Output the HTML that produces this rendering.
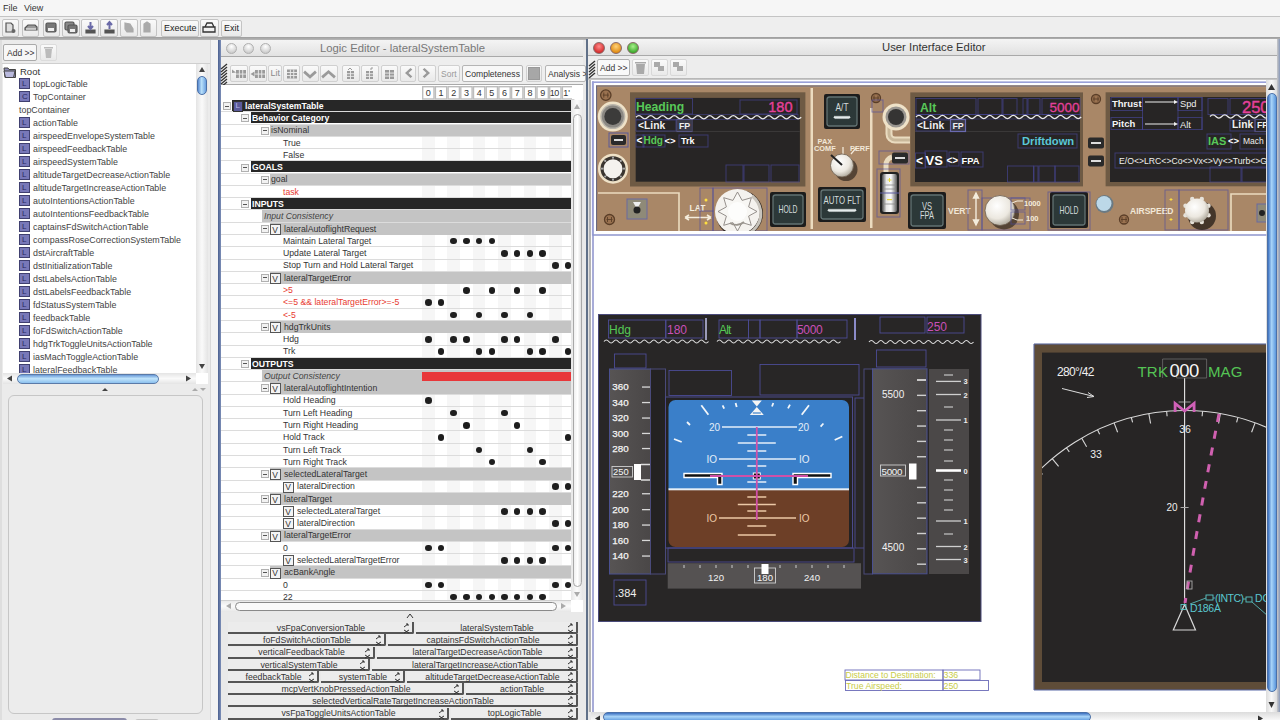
<!DOCTYPE html>
<html><head><meta charset="utf-8">
<style>
*{margin:0;padding:0;box-sizing:border-box}
html,body{width:1280px;height:720px;overflow:hidden;background:#e8e8e8;font-family:"Liberation Sans",sans-serif;position:relative}
.a{position:absolute}
.t{position:absolute;white-space:nowrap;line-height:1}
.btn{position:absolute;background:linear-gradient(#fafafa,#e9e9e9);border:1px solid #c4c4c4;border-radius:2px}
svg{position:absolute;overflow:visible}
</style></head><body>

<div class="a" style="left:0px;top:0px;width:1280px;height:16px;background:#f6f6f6"></div>
<div class="t" style="left:3px;top:4px;font-size:9px;color:#333;">File</div>
<div class="t" style="left:24px;top:4px;font-size:9px;color:#333;">View</div>
<div class="a" style="left:0px;top:16px;width:1280px;height:1px;background:#c4c4c4"></div>
<div class="a" style="left:0px;top:17px;width:1280px;height:21px;background:#eeeeee"></div>
<div class="a" style="left:0px;top:37px;width:1280px;height:3px;background:linear-gradient(#9c9c9c,#b8b8b8)"></div>
<div class="btn" style="left:1.5px;top:19px;width:17.5px;height:18px"></div>
<div class="btn" style="left:21.5px;top:19px;width:17.5px;height:18px"></div>
<div class="btn" style="left:42.5px;top:19px;width:17.5px;height:18px"></div>
<div class="btn" style="left:62px;top:19px;width:18px;height:18px"></div>
<div class="btn" style="left:81px;top:19px;width:18px;height:18px"></div>
<div class="btn" style="left:100px;top:19px;width:18px;height:18px"></div>
<div class="btn" style="left:120px;top:19px;width:18px;height:18px"></div>
<div class="btn" style="left:140px;top:19px;width:17px;height:18px"></div>
<div class="btn" style="left:161px;top:20px;width:38px;height:17px"></div>
<div class="t" style="left:164px;top:24px;font-size:9px;color:#222;">Execute</div>
<div class="btn" style="left:200px;top:19px;width:19px;height:18px"></div>
<div class="btn" style="left:221px;top:20px;width:21px;height:17px"></div>
<div class="t" style="left:224px;top:24px;font-size:9px;color:#222;">Exit</div>
<svg style="left:0;top:0" width="260" height="40">
<g fill="none" stroke="#555" stroke-width="1.2">
<path d="M6 23h5l2 2v7H6z" fill="#ddd"/><circle cx="13.5" cy="31" r="2" fill="#666" stroke="none"/>
<path d="M25 28l3-3h7l2 2v3h-12z" fill="#999"/><path d="M26 29h10" stroke="#eee"/>
<rect x="46" y="23" width="10" height="9" rx="1.5" fill="#777"/><rect x="48" y="28" width="6" height="3" fill="#eee" stroke="none"/>
<rect x="65" y="22" width="9" height="8" rx="1.5" fill="#888"/><rect x="68" y="25" width="9" height="8" rx="1.5" fill="#777"/><rect x="70" y="29" width="5" height="3" fill="#eee" stroke="none"/>
<path d="M86 30h9v3h-9z" fill="#555"/><path d="M90.5 22v7M88 26l2.5 3 2.5-3" stroke="#6a6aa8" stroke-width="2"/>
<path d="M105 30h9v3h-9z" fill="#555"/><path d="M109.5 29v-7M107 25l2.5-3 2.5 3" stroke="#6a6aa8" stroke-width="2"/>
<path d="M125 23l5 1 3 5v3h-6l-2-3z" fill="#aaa" stroke="#aaa"/>
<path d="M147 22l3 2v8h-6v-8z" fill="#aaa" stroke="#aaa"/>
<path d="M203 27h12v5h-12z M205 27l2-4h5l2 4" stroke="#333" stroke-width="1.3"/>
</g></svg>
<div class="a" style="left:0px;top:40px;width:219px;height:680px;background:#ebebeb"></div>
<div class="a" style="left:0px;top:40px;width:2px;height:680px;background:#dedede"></div>
<div class="a" style="left:210px;top:40px;width:1px;height:680px;background:#d9d9d9"></div>
<div class="a" style="left:211px;top:40px;width:7px;height:680px;background:#f3f3f3"></div>
<div class="btn" style="left:3px;top:44px;width:34px;height:17px;background:#f7f7f7;border-color:#aaa"></div>
<div class="t" style="left:7px;top:49px;font-size:8.5px;color:#333;">Add &gt;&gt;</div>
<div class="btn" style="left:40px;top:44px;width:17px;height:17px;border-color:#dcdcdc"></div>
<svg style="left:0;top:0" width="60" height="64"><path d="M45 49h7l-1 9h-5z" fill="#bbb"/><rect x="44" y="47" width="9" height="1.5" fill="#bbb"/></svg>
<div class="a" style="left:2px;top:63px;width:208px;height:1px;background:#cfcfcf"></div>
<div class="a" style="left:3px;top:64px;width:193px;height:309px;background:#fff"></div>
<div class="a" style="left:3px;top:64px;width:193px;height:309px;overflow:hidden">
<svg style="left:0;top:2.0999999999999943px" width="14" height="12"><path d="M1 2h4l1 1.5h6.5v8H2z" fill="#8f8fb8" stroke="#444" stroke-width="1"/><path d="M1 5h11l-1.5 6.5H2.5z" fill="#b9b9dd" stroke="#444" stroke-width="1"/></svg>
<div class="t" style="left:17px;top:3.0999999999999943px;font-size:9.5px;color:#333;">Root</div>
<div class="a" style="left:16px;top:14.299999999999994px;width:10.5px;height:10.5px;background:#7878b8;border:1px solid #404070"><div class="t" style="left:2px;top:1px;font-size:8px;color:#2a2a60">L</div></div>
<div class="t" style="left:30px;top:16.099999999999994px;font-size:8.9px;color:#444;">topLogicTable</div>
<div class="a" style="left:16px;top:27.299999999999994px;width:10.5px;height:10.5px;background:#7878b8;border:1px solid #404070"><div class="t" style="left:2px;top:1px;font-size:8px;color:#2a2a60">C</div></div>
<div class="t" style="left:30px;top:29.099999999999994px;font-size:8.9px;color:#444;">TopContainer</div>
<div class="t" style="left:16px;top:42.099999999999994px;font-size:8.9px;color:#444;">topContainer</div>
<div class="a" style="left:16px;top:53.3px;width:10.5px;height:10.5px;background:#7878b8;border:1px solid #404070"><div class="t" style="left:2px;top:1px;font-size:8px;color:#2a2a60">L</div></div>
<div class="t" style="left:30px;top:55.099999999999994px;font-size:8.9px;color:#444;">actionTable</div>
<div class="a" style="left:16px;top:66.3px;width:10.5px;height:10.5px;background:#7878b8;border:1px solid #404070"><div class="t" style="left:2px;top:1px;font-size:8px;color:#2a2a60">L</div></div>
<div class="t" style="left:30px;top:68.1px;font-size:8.9px;color:#444;">airspeedEnvelopeSystemTable</div>
<div class="a" style="left:16px;top:79.3px;width:10.5px;height:10.5px;background:#7878b8;border:1px solid #404070"><div class="t" style="left:2px;top:1px;font-size:8px;color:#2a2a60">L</div></div>
<div class="t" style="left:30px;top:81.1px;font-size:8.9px;color:#444;">airspeedFeedbackTable</div>
<div class="a" style="left:16px;top:92.3px;width:10.5px;height:10.5px;background:#7878b8;border:1px solid #404070"><div class="t" style="left:2px;top:1px;font-size:8px;color:#2a2a60">L</div></div>
<div class="t" style="left:30px;top:94.1px;font-size:8.9px;color:#444;">airspeedSystemTable</div>
<div class="a" style="left:16px;top:105.3px;width:10.5px;height:10.5px;background:#7878b8;border:1px solid #404070"><div class="t" style="left:2px;top:1px;font-size:8px;color:#2a2a60">L</div></div>
<div class="t" style="left:30px;top:107.1px;font-size:8.9px;color:#444;">altitudeTargetDecreaseActionTable</div>
<div class="a" style="left:16px;top:118.3px;width:10.5px;height:10.5px;background:#7878b8;border:1px solid #404070"><div class="t" style="left:2px;top:1px;font-size:8px;color:#2a2a60">L</div></div>
<div class="t" style="left:30px;top:120.1px;font-size:8.9px;color:#444;">altitudeTargetIncreaseActionTable</div>
<div class="a" style="left:16px;top:131.29999999999998px;width:10.5px;height:10.5px;background:#7878b8;border:1px solid #404070"><div class="t" style="left:2px;top:1px;font-size:8px;color:#2a2a60">L</div></div>
<div class="t" style="left:30px;top:133.1px;font-size:8.9px;color:#444;">autoIntentionsActionTable</div>
<div class="a" style="left:16px;top:144.29999999999998px;width:10.5px;height:10.5px;background:#7878b8;border:1px solid #404070"><div class="t" style="left:2px;top:1px;font-size:8px;color:#2a2a60">L</div></div>
<div class="t" style="left:30px;top:146.1px;font-size:8.9px;color:#444;">autoIntentionsFeedbackTable</div>
<div class="a" style="left:16px;top:157.29999999999998px;width:10.5px;height:10.5px;background:#7878b8;border:1px solid #404070"><div class="t" style="left:2px;top:1px;font-size:8px;color:#2a2a60">L</div></div>
<div class="t" style="left:30px;top:159.1px;font-size:8.9px;color:#444;">captainsFdSwitchActionTable</div>
<div class="a" style="left:16px;top:170.29999999999998px;width:10.5px;height:10.5px;background:#7878b8;border:1px solid #404070"><div class="t" style="left:2px;top:1px;font-size:8px;color:#2a2a60">L</div></div>
<div class="t" style="left:30px;top:172.1px;font-size:8.9px;color:#444;">compassRoseCorrectionSystemTable</div>
<div class="a" style="left:16px;top:183.29999999999998px;width:10.5px;height:10.5px;background:#7878b8;border:1px solid #404070"><div class="t" style="left:2px;top:1px;font-size:8px;color:#2a2a60">L</div></div>
<div class="t" style="left:30px;top:185.1px;font-size:8.9px;color:#444;">dstAircraftTable</div>
<div class="a" style="left:16px;top:196.3px;width:10.5px;height:10.5px;background:#7878b8;border:1px solid #404070"><div class="t" style="left:2px;top:1px;font-size:8px;color:#2a2a60">L</div></div>
<div class="t" style="left:30px;top:198.10000000000002px;font-size:8.9px;color:#444;">dstInitializationTable</div>
<div class="a" style="left:16px;top:209.3px;width:10.5px;height:10.5px;background:#7878b8;border:1px solid #404070"><div class="t" style="left:2px;top:1px;font-size:8px;color:#2a2a60">L</div></div>
<div class="t" style="left:30px;top:211.10000000000002px;font-size:8.9px;color:#444;">dstLabelsActionTable</div>
<div class="a" style="left:16px;top:222.3px;width:10.5px;height:10.5px;background:#7878b8;border:1px solid #404070"><div class="t" style="left:2px;top:1px;font-size:8px;color:#2a2a60">L</div></div>
<div class="t" style="left:30px;top:224.10000000000002px;font-size:8.9px;color:#444;">dstLabelsFeedbackTable</div>
<div class="a" style="left:16px;top:235.3px;width:10.5px;height:10.5px;background:#7878b8;border:1px solid #404070"><div class="t" style="left:2px;top:1px;font-size:8px;color:#2a2a60">L</div></div>
<div class="t" style="left:30px;top:237.10000000000002px;font-size:8.9px;color:#444;">fdStatusSystemTable</div>
<div class="a" style="left:16px;top:248.3px;width:10.5px;height:10.5px;background:#7878b8;border:1px solid #404070"><div class="t" style="left:2px;top:1px;font-size:8px;color:#2a2a60">L</div></div>
<div class="t" style="left:30px;top:250.10000000000002px;font-size:8.9px;color:#444;">feedbackTable</div>
<div class="a" style="left:16px;top:261.3px;width:10.5px;height:10.5px;background:#7878b8;border:1px solid #404070"><div class="t" style="left:2px;top:1px;font-size:8px;color:#2a2a60">L</div></div>
<div class="t" style="left:30px;top:263.1px;font-size:8.9px;color:#444;">foFdSwitchActionTable</div>
<div class="a" style="left:16px;top:274.3px;width:10.5px;height:10.5px;background:#7878b8;border:1px solid #404070"><div class="t" style="left:2px;top:1px;font-size:8px;color:#2a2a60">L</div></div>
<div class="t" style="left:30px;top:276.1px;font-size:8.9px;color:#444;">hdgTrkToggleUnitsActionTable</div>
<div class="a" style="left:16px;top:287.3px;width:10.5px;height:10.5px;background:#7878b8;border:1px solid #404070"><div class="t" style="left:2px;top:1px;font-size:8px;color:#2a2a60">L</div></div>
<div class="t" style="left:30px;top:289.1px;font-size:8.9px;color:#444;">iasMachToggleActionTable</div>
<div class="a" style="left:16px;top:300.3px;width:10.5px;height:10.5px;background:#7878b8;border:1px solid #404070"><div class="t" style="left:2px;top:1px;font-size:8px;color:#2a2a60">L</div></div>
<div class="t" style="left:30px;top:302.1px;font-size:8.9px;color:#444;">lateralFeedbackTable</div>
</div>
<div class="a" style="left:196px;top:64px;width:12px;height:309px;background:linear-gradient(90deg,#e4e4e4,#fafafa,#e4e4e4)"></div>
<svg style="left:196px;top:64px" width="12" height="309"><path d="M6 3l3 5H3z" fill="#444"/><path d="M3 300h6l-3 5z" fill="#444"/></svg>
<div class="a" style="left:197px;top:76px;width:10px;height:19px;background:linear-gradient(90deg,#5a8ad0,#b8e0fa 45%,#6aa0e0);border-radius:5px;border:1px solid #4a70a8"></div>
<div class="a" style="left:3px;top:373px;width:193px;height:11px;background:linear-gradient(#e4e4e4,#fafafa,#e4e4e4)"></div>
<svg style="left:3px;top:373px" width="193" height="11"><path d="M4 5.5l5-3v6z" fill="#444"/><path d="M183 2.5l5 3-5 3z" fill="#444"/></svg>
<div class="a" style="left:17px;top:373.5px;width:142px;height:10.5px;background:linear-gradient(#6a9ad8,#c0e4fb 45%,#8cc0ee);border-radius:5px;border:1px solid #5a7aa8"></div>
<div class="a" style="left:196px;top:373px;width:12px;height:11px;background:#fff"></div>
<svg style="left:0;top:384px" width="210" height="11"><path d="M102 7l3-3 3 3z" fill="#444"/><path d="M192 7l3-3 3 3z" fill="#aaa"/><path d="M200 4h6l-3 3z" fill="#aaa"/></svg>
<div class="a" style="left:8px;top:395px;width:195px;height:319px;background:#ececec;border:1px solid #c6c6c6;border-radius:6px"></div>
<div class="a" style="left:52px;top:718px;width:75px;height:4px;background:#8a8aa8;border-radius:3px 3px 0 0"></div>
<div class="a" style="left:135px;top:718.5px;width:24px;height:4px;background:#c4c4c4;border-radius:3px 3px 0 0"></div>
<div class="a" style="left:218px;top:40px;width:368px;height:680px;background:#e9e9e9"></div>
<div class="a" style="left:218px;top:40px;width:3px;height:680px;background:linear-gradient(90deg,#4a5f8f,#7d8fb8)"></div>
<div class="a" style="left:221px;top:40px;width:362px;height:16px;background:linear-gradient(#f4f4f4,#e2e2e2)"></div>
<div class="a" style="left:221px;top:56px;width:362px;height:1px;background:#a9a9a9"></div>
<div class="a" style="left:225.5px;top:43px;width:11px;height:11px;border-radius:50%;background:radial-gradient(circle at 50% 30%,#fff,#d8d8d8 60%,#bcbcbc);border:1px solid #b0b0b0"></div>
<div class="a" style="left:242.5px;top:43px;width:11px;height:11px;border-radius:50%;background:radial-gradient(circle at 50% 30%,#fff,#d8d8d8 60%,#bcbcbc);border:1px solid #b0b0b0"></div>
<div class="a" style="left:259.5px;top:43px;width:11px;height:11px;border-radius:50%;background:radial-gradient(circle at 50% 30%,#fff,#d8d8d8 60%,#bcbcbc);border:1px solid #b0b0b0"></div>
<div class="t" style="left:320px;top:43px;font-size:11.3px;color:#787878;">Logic Editor - lateralSystemTable</div>
<div class="a" style="left:221px;top:57px;width:362px;height:28px;background:#eeeeee"></div>
<div class="a" style="left:221px;top:84px;width:362px;height:1px;background:#a9a9a9"></div>
<svg style="left:221px;top:64px" width="7" height="20"><g stroke="#333" stroke-width="1.3"><path d="M0 5l6 -5"/><path d="M0 8l6 -5"/><path d="M0 11l6 -5"/><path d="M0 14l6 -5"/><path d="M0 17l6 -5"/><path d="M0 20l6 -5"/><path d="M0 23l6 -5"/></g></svg>
<div class="btn" style="left:230px;top:65px;width:18px;height:17px;border-color:#d0d0d0"></div>
<div class="btn" style="left:249px;top:65px;width:18px;height:17px;border-color:#d0d0d0"></div>
<div class="btn" style="left:268px;top:65px;width:14px;height:17px;border-color:#d0d0d0"></div>
<div class="btn" style="left:283px;top:65px;width:17px;height:17px;border-color:#d0d0d0"></div>
<div class="btn" style="left:302px;top:65px;width:17px;height:17px;border-color:#d0d0d0"></div>
<div class="btn" style="left:320px;top:65px;width:18px;height:17px;border-color:#d0d0d0"></div>
<div class="btn" style="left:342px;top:65px;width:18px;height:17px;border-color:#d0d0d0"></div>
<div class="btn" style="left:361px;top:65px;width:18px;height:17px;border-color:#d0d0d0"></div>
<div class="btn" style="left:381px;top:65px;width:17px;height:17px;border-color:#d0d0d0"></div>
<div class="btn" style="left:400px;top:65px;width:16px;height:17px;border-color:#d0d0d0"></div>
<div class="btn" style="left:418px;top:65px;width:18px;height:17px;border-color:#d0d0d0"></div>
<svg style="left:0;top:0" width="600" height="90"><rect x="236" y="70" width="10" height="8" fill="#9a9a9a"/><rect x="238.9" y="70" width="0.9" height="8" fill="#eee"/><rect x="242.3" y="70" width="0.9" height="8" fill="#eee"/><rect x="236" y="73.6" width="10" height="0.9" fill="#eee"/><path d="M232 69.5l4 3-4 0.5z" fill="#9a9a9a"/><rect x="255" y="70" width="10" height="8" fill="#9a9a9a"/><rect x="257.9" y="70" width="0.9" height="8" fill="#eee"/><rect x="261.3" y="70" width="0.9" height="8" fill="#eee"/><rect x="255" y="73.6" width="10" height="0.9" fill="#eee"/><path d="M250.5 74l4-2.5v5z" fill="#9a9a9a"/><rect x="287" y="69.5" width="10" height="9" fill="#9a9a9a"/><rect x="289.9" y="69.5" width="0.9" height="9" fill="#eee"/><rect x="293.3" y="69.5" width="0.9" height="9" fill="#eee"/><rect x="287" y="72.1" width="10" height="0.9" fill="#eee"/><rect x="287" y="75.1" width="10" height="0.9" fill="#eee"/><path d="M305 70.5l5 4.5 5-4.5 1.8 2.2-6.8 6-6.8-6z" fill="#9a9a9a"/><path d="M323 78.5l5.5-5 5.5 5 1.8-2.2-7.3-6.3-7.3 6.3z" fill="#9a9a9a"/><rect x="347" y="71" width="7" height="8" fill="#9a9a9a"/><rect x="350.1" y="71" width="0.9" height="8" fill="#eee"/><rect x="347" y="73.3" width="7" height="0.9" fill="#eee"/><rect x="347" y="75.9" width="7" height="0.9" fill="#eee"/><path d="M348 70l2-2 2 2" stroke="#9a9a9a" fill="none"/><rect x="366" y="71" width="7" height="8" fill="#9a9a9a"/><rect x="369.1" y="71" width="0.9" height="8" fill="#eee"/><rect x="366" y="73.3" width="7" height="0.9" fill="#eee"/><rect x="366" y="75.9" width="7" height="0.9" fill="#eee"/><path d="M371 70v-2h2" stroke="#9a9a9a" fill="none"/><rect x="385" y="70" width="9" height="9" fill="#9a9a9a"/><rect x="389.1" y="70" width="0.9" height="9" fill="#eee"/><rect x="385" y="72.6" width="9" height="0.9" fill="#eee"/><rect x="385" y="75.6" width="9" height="0.9" fill="#eee"/><path d="M410.5 68l-5.5 5 5.5 5 1.8-1.6-3.8-3.4 3.8-3.4z" fill="#9a9a9a"/><path d="M424.5 68l5.5 5-5.5 5-1.8-1.6 3.8-3.4-3.8-3.4z" fill="#9a9a9a"/></svg>
<div class="t" style="left:270.5px;top:69px;font-size:9px;color:#8a8a8a;">Lit</div>
<div class="btn" style="left:438px;top:65px;width:22px;height:17px;border-color:#d0d0d0"></div>
<div class="t" style="left:441px;top:69.5px;font-size:8.5px;color:#999;">Sort</div>
<div class="btn" style="left:462px;top:65px;width:61px;height:17px;border-color:#b5b5b5;background:#f8f8f8"></div>
<div class="t" style="left:465px;top:69.5px;font-size:8.6px;color:#333;">Completeness</div>
<div class="btn" style="left:526px;top:65px;width:16px;height:17px;border-color:#d0d0d0"></div>
<div class="a" style="left:528px;top:67px;width:12px;height:13px;background:#a7a7a7;border:1px solid #999"></div>
<div class="btn" style="left:545px;top:65px;width:41px;height:17px;border-color:#b5b5b5;background:#f8f8f8"></div>
<div class="t" style="left:548px;top:69.5px;font-size:8.6px;color:#333;">Analysis &gt;</div>
<div class="a" style="left:221px;top:85px;width:362px;height:635px;background:#fff"></div>
<svg style="left:0;top:0" width="600" height="110" font-family="Liberation Sans"><rect x="422.70" y="86.7" width="11.3" height="12.3" fill="#fff" stroke="#bdbdbd" stroke-width="1.4"/><text x="428.35" y="96.3" font-size="9" fill="#333" text-anchor="middle">0</text><rect x="435.40" y="86.7" width="11.3" height="12.3" fill="#fff" stroke="#bdbdbd" stroke-width="1.4"/><text x="441.05" y="96.3" font-size="9" fill="#333" text-anchor="middle">1</text><rect x="448.10" y="86.7" width="11.3" height="12.3" fill="#fff" stroke="#bdbdbd" stroke-width="1.4"/><text x="453.75" y="96.3" font-size="9" fill="#333" text-anchor="middle">2</text><rect x="460.80" y="86.7" width="11.3" height="12.3" fill="#fff" stroke="#bdbdbd" stroke-width="1.4"/><text x="466.45" y="96.3" font-size="9" fill="#333" text-anchor="middle">3</text><rect x="473.50" y="86.7" width="11.3" height="12.3" fill="#fff" stroke="#bdbdbd" stroke-width="1.4"/><text x="479.15" y="96.3" font-size="9" fill="#333" text-anchor="middle">4</text><rect x="486.20" y="86.7" width="11.3" height="12.3" fill="#fff" stroke="#bdbdbd" stroke-width="1.4"/><text x="491.85" y="96.3" font-size="9" fill="#333" text-anchor="middle">5</text><rect x="498.90" y="86.7" width="11.3" height="12.3" fill="#fff" stroke="#bdbdbd" stroke-width="1.4"/><text x="504.55" y="96.3" font-size="9" fill="#333" text-anchor="middle">6</text><rect x="511.60" y="86.7" width="11.3" height="12.3" fill="#fff" stroke="#bdbdbd" stroke-width="1.4"/><text x="517.25" y="96.3" font-size="9" fill="#333" text-anchor="middle">7</text><rect x="524.30" y="86.7" width="11.3" height="12.3" fill="#fff" stroke="#bdbdbd" stroke-width="1.4"/><text x="529.95" y="96.3" font-size="9" fill="#333" text-anchor="middle">8</text><rect x="537.00" y="86.7" width="11.3" height="12.3" fill="#fff" stroke="#bdbdbd" stroke-width="1.4"/><text x="542.65" y="96.3" font-size="9" fill="#333" text-anchor="middle">9</text><rect x="549.70" y="86.7" width="11.3" height="12.3" fill="#fff" stroke="#bdbdbd" stroke-width="1.4"/><text x="549.80" y="96.3" font-size="9" fill="#333" letter-spacing="-0.6">10</text><rect x="562.40" y="86.7" width="11.3" height="12.3" fill="#fff" stroke="#bdbdbd" stroke-width="1.4"/><text x="563.20" y="96.3" font-size="9" fill="#333">1'</text></svg>
<div class="a" style="left:571.5px;top:86px;width:11px;height:13px;background:#fff"></div>
<div class="a" style="left:0;top:0;width:1280px;height:720px;clip-path:inset(100px 709px 119px 221px)">
<div class="a" style="left:221px;top:111.275px;width:352px;height:1px;background:#dcdcdc"></div>
<div class="a" style="left:232px;top:100.0px;width:352px;height:11.075000000000001px;background:#272727"></div>
<div class="a" style="left:223px;top:102.1375px;width:8px;height:8px;border:1px solid #b0b0b0;background:#f2f2f2"><div class="a" style="left:1px;top:2.5px;width:4px;height:1px;background:#555"></div></div>
<div class="a" style="left:233px;top:100.6375px;width:10px;height:11px;background:#5a5a9a;border:1px solid #333"></div>
<div class="t" style="left:235.5px;top:102.1375px;font-size:8px;color:#b8b8e8;">L</div>
<div class="t" style="left:245px;top:101.8375px;font-size:8.7px;color:#fff;font-weight:bold">lateralSystemTable</div>
<div class="a" style="left:221px;top:123.55000000000001px;width:352px;height:1px;background:#dcdcdc"></div>
<div class="a" style="left:251px;top:112.275px;width:352px;height:11.075000000000001px;background:#272727"></div>
<div class="a" style="left:241px;top:114.41250000000001px;width:8px;height:8px;border:1px solid #b0b0b0;background:#f2f2f2"><div class="a" style="left:1px;top:2.5px;width:4px;height:1px;background:#555"></div></div>
<div class="t" style="left:252px;top:114.11250000000001px;font-size:8.7px;color:#fff;font-weight:bold">Behavior Category</div>
<div class="a" style="left:221px;top:135.825px;width:352px;height:1px;background:#dcdcdc"></div>
<div class="a" style="left:270px;top:124.55px;width:352px;height:11.775px;background:#c4c4c4"></div>
<div class="a" style="left:261px;top:126.6875px;width:8px;height:8px;border:1px solid #b0b0b0;background:#f2f2f2"><div class="a" style="left:1px;top:2.5px;width:4px;height:1px;background:#555"></div></div>
<div class="t" style="left:271px;top:126.3875px;font-size:8.7px;color:#333;">isNominal</div>
<div class="a" style="left:422.0px;top:136.825px;width:12.7px;height:12.275px;background:#f6f6f6"></div>
<div class="a" style="left:447.4px;top:136.825px;width:12.7px;height:12.275px;background:#f6f6f6"></div>
<div class="a" style="left:472.8px;top:136.825px;width:12.7px;height:12.275px;background:#f6f6f6"></div>
<div class="a" style="left:498.2px;top:136.825px;width:12.7px;height:12.275px;background:#f6f6f6"></div>
<div class="a" style="left:523.6px;top:136.825px;width:12.7px;height:12.275px;background:#f6f6f6"></div>
<div class="a" style="left:549.0px;top:136.825px;width:12.7px;height:12.275px;background:#f6f6f6"></div>
<div class="a" style="left:221px;top:148.1px;width:352px;height:1px;background:#dcdcdc"></div>
<div class="t" style="left:283px;top:138.66249999999997px;font-size:8.7px;color:#333;">True</div>
<div class="a" style="left:422.0px;top:149.1px;width:12.7px;height:12.275px;background:#f6f6f6"></div>
<div class="a" style="left:447.4px;top:149.1px;width:12.7px;height:12.275px;background:#f6f6f6"></div>
<div class="a" style="left:472.8px;top:149.1px;width:12.7px;height:12.275px;background:#f6f6f6"></div>
<div class="a" style="left:498.2px;top:149.1px;width:12.7px;height:12.275px;background:#f6f6f6"></div>
<div class="a" style="left:523.6px;top:149.1px;width:12.7px;height:12.275px;background:#f6f6f6"></div>
<div class="a" style="left:549.0px;top:149.1px;width:12.7px;height:12.275px;background:#f6f6f6"></div>
<div class="a" style="left:221px;top:160.375px;width:352px;height:1px;background:#dcdcdc"></div>
<div class="t" style="left:283px;top:150.93749999999997px;font-size:8.7px;color:#333;">False</div>
<div class="a" style="left:221px;top:172.65px;width:352px;height:1px;background:#dcdcdc"></div>
<div class="a" style="left:251px;top:161.375px;width:352px;height:11.075000000000001px;background:#272727"></div>
<div class="a" style="left:241px;top:163.5125px;width:8px;height:8px;border:1px solid #b0b0b0;background:#f2f2f2"><div class="a" style="left:1px;top:2.5px;width:4px;height:1px;background:#555"></div></div>
<div class="t" style="left:252px;top:163.21249999999998px;font-size:8.7px;color:#fff;font-weight:bold">GOALS</div>
<div class="a" style="left:221px;top:184.925px;width:352px;height:1px;background:#dcdcdc"></div>
<div class="a" style="left:270px;top:173.65px;width:352px;height:11.775px;background:#c4c4c4"></div>
<div class="a" style="left:261px;top:175.7875px;width:8px;height:8px;border:1px solid #b0b0b0;background:#f2f2f2"><div class="a" style="left:1px;top:2.5px;width:4px;height:1px;background:#555"></div></div>
<div class="t" style="left:271px;top:175.48749999999998px;font-size:8.7px;color:#333;">goal</div>
<div class="a" style="left:422.0px;top:185.925px;width:12.7px;height:12.275px;background:#f6f6f6"></div>
<div class="a" style="left:447.4px;top:185.925px;width:12.7px;height:12.275px;background:#f6f6f6"></div>
<div class="a" style="left:472.8px;top:185.925px;width:12.7px;height:12.275px;background:#f6f6f6"></div>
<div class="a" style="left:498.2px;top:185.925px;width:12.7px;height:12.275px;background:#f6f6f6"></div>
<div class="a" style="left:523.6px;top:185.925px;width:12.7px;height:12.275px;background:#f6f6f6"></div>
<div class="a" style="left:549.0px;top:185.925px;width:12.7px;height:12.275px;background:#f6f6f6"></div>
<div class="a" style="left:221px;top:197.20000000000002px;width:352px;height:1px;background:#dcdcdc"></div>
<div class="t" style="left:283px;top:187.7625px;font-size:8.7px;color:#e83a30;">task</div>
<div class="a" style="left:221px;top:209.475px;width:352px;height:1px;background:#dcdcdc"></div>
<div class="a" style="left:251px;top:198.2px;width:352px;height:11.075000000000001px;background:#272727"></div>
<div class="a" style="left:241px;top:200.33749999999998px;width:8px;height:8px;border:1px solid #b0b0b0;background:#f2f2f2"><div class="a" style="left:1px;top:2.5px;width:4px;height:1px;background:#555"></div></div>
<div class="t" style="left:252px;top:200.03749999999997px;font-size:8.7px;color:#fff;font-weight:bold">INPUTS</div>
<div class="a" style="left:221px;top:221.75000000000003px;width:352px;height:1px;background:#dcdcdc"></div>
<div class="a" style="left:262px;top:210.47500000000002px;width:352px;height:11.775px;background:#c4c4c4"></div>
<div class="t" style="left:264px;top:212.3125px;font-size:8.7px;color:#444;font-style:italic">Input Consistency</div>
<div class="a" style="left:221px;top:234.025px;width:352px;height:1px;background:#dcdcdc"></div>
<div class="a" style="left:270px;top:222.75px;width:352px;height:11.775px;background:#c4c4c4"></div>
<div class="a" style="left:261px;top:224.8875px;width:8px;height:8px;border:1px solid #b0b0b0;background:#f2f2f2"><div class="a" style="left:1px;top:2.5px;width:4px;height:1px;background:#555"></div></div>
<div class="a" style="left:270px;top:223.8875px;width:11px;height:11px;border:1.3px solid #555;background:#f4f4f4"><div class="t" style="left:1.2px;top:0.8px;font-size:8.5px;color:#333">V</div></div>
<div class="t" style="left:284px;top:224.58749999999998px;font-size:8.7px;color:#333;">lateralAutoflightRequest</div>
<div class="a" style="left:422.0px;top:235.025px;width:12.7px;height:12.275px;background:#f6f6f6"></div>
<div class="a" style="left:447.4px;top:235.025px;width:12.7px;height:12.275px;background:#f6f6f6"></div>
<div class="a" style="left:472.8px;top:235.025px;width:12.7px;height:12.275px;background:#f6f6f6"></div>
<div class="a" style="left:498.2px;top:235.025px;width:12.7px;height:12.275px;background:#f6f6f6"></div>
<div class="a" style="left:523.6px;top:235.025px;width:12.7px;height:12.275px;background:#f6f6f6"></div>
<div class="a" style="left:549.0px;top:235.025px;width:12.7px;height:12.275px;background:#f6f6f6"></div>
<div class="a" style="left:221px;top:246.3px;width:352px;height:1px;background:#dcdcdc"></div>
<div class="t" style="left:283px;top:236.86249999999998px;font-size:8.7px;color:#333;">Maintain Lateral Target</div>
<div class="a" style="left:450.4px;top:237.86249999999998px;width:6.6px;height:6.6px;border-radius:50%;background:#1e1e1e"></div>
<div class="a" style="left:463.09999999999997px;top:237.86249999999998px;width:6.6px;height:6.6px;border-radius:50%;background:#1e1e1e"></div>
<div class="a" style="left:475.8px;top:237.86249999999998px;width:6.6px;height:6.6px;border-radius:50%;background:#1e1e1e"></div>
<div class="a" style="left:488.5px;top:237.86249999999998px;width:6.6px;height:6.6px;border-radius:50%;background:#1e1e1e"></div>
<div class="a" style="left:422.0px;top:247.3px;width:12.7px;height:12.275px;background:#f6f6f6"></div>
<div class="a" style="left:447.4px;top:247.3px;width:12.7px;height:12.275px;background:#f6f6f6"></div>
<div class="a" style="left:472.8px;top:247.3px;width:12.7px;height:12.275px;background:#f6f6f6"></div>
<div class="a" style="left:498.2px;top:247.3px;width:12.7px;height:12.275px;background:#f6f6f6"></div>
<div class="a" style="left:523.6px;top:247.3px;width:12.7px;height:12.275px;background:#f6f6f6"></div>
<div class="a" style="left:549.0px;top:247.3px;width:12.7px;height:12.275px;background:#f6f6f6"></div>
<div class="a" style="left:221px;top:258.575px;width:352px;height:1px;background:#dcdcdc"></div>
<div class="t" style="left:283px;top:249.1375px;font-size:8.7px;color:#333;">Update Lateral Target</div>
<div class="a" style="left:501.2px;top:250.1375px;width:6.6px;height:6.6px;border-radius:50%;background:#1e1e1e"></div>
<div class="a" style="left:513.9000000000001px;top:250.1375px;width:6.6px;height:6.6px;border-radius:50%;background:#1e1e1e"></div>
<div class="a" style="left:526.6px;top:250.1375px;width:6.6px;height:6.6px;border-radius:50%;background:#1e1e1e"></div>
<div class="a" style="left:539.3000000000001px;top:250.1375px;width:6.6px;height:6.6px;border-radius:50%;background:#1e1e1e"></div>
<div class="a" style="left:422.0px;top:259.57500000000005px;width:12.7px;height:12.275px;background:#f6f6f6"></div>
<div class="a" style="left:447.4px;top:259.57500000000005px;width:12.7px;height:12.275px;background:#f6f6f6"></div>
<div class="a" style="left:472.8px;top:259.57500000000005px;width:12.7px;height:12.275px;background:#f6f6f6"></div>
<div class="a" style="left:498.2px;top:259.57500000000005px;width:12.7px;height:12.275px;background:#f6f6f6"></div>
<div class="a" style="left:523.6px;top:259.57500000000005px;width:12.7px;height:12.275px;background:#f6f6f6"></div>
<div class="a" style="left:549.0px;top:259.57500000000005px;width:12.7px;height:12.275px;background:#f6f6f6"></div>
<div class="a" style="left:221px;top:270.85px;width:352px;height:1px;background:#dcdcdc"></div>
<div class="t" style="left:283px;top:261.4125px;font-size:8.7px;color:#333;">Stop Turn and Hold Lateral Target</div>
<div class="a" style="left:552.0px;top:262.4125px;width:6.6px;height:6.6px;border-radius:50%;background:#1e1e1e"></div>
<div class="a" style="left:564.7px;top:262.4125px;width:6.6px;height:6.6px;border-radius:50%;background:#1e1e1e"></div>
<div class="a" style="left:221px;top:283.125px;width:352px;height:1px;background:#dcdcdc"></div>
<div class="a" style="left:270px;top:271.85px;width:352px;height:11.775px;background:#c4c4c4"></div>
<div class="a" style="left:261px;top:273.9875px;width:8px;height:8px;border:1px solid #b0b0b0;background:#f2f2f2"><div class="a" style="left:1px;top:2.5px;width:4px;height:1px;background:#555"></div></div>
<div class="a" style="left:270px;top:272.9875px;width:11px;height:11px;border:1.3px solid #555;background:#f4f4f4"><div class="t" style="left:1.2px;top:0.8px;font-size:8.5px;color:#333">V</div></div>
<div class="t" style="left:284px;top:273.6875px;font-size:8.7px;color:#333;">lateralTargetError</div>
<div class="a" style="left:422.0px;top:284.125px;width:12.7px;height:12.275px;background:#f6f6f6"></div>
<div class="a" style="left:447.4px;top:284.125px;width:12.7px;height:12.275px;background:#f6f6f6"></div>
<div class="a" style="left:472.8px;top:284.125px;width:12.7px;height:12.275px;background:#f6f6f6"></div>
<div class="a" style="left:498.2px;top:284.125px;width:12.7px;height:12.275px;background:#f6f6f6"></div>
<div class="a" style="left:523.6px;top:284.125px;width:12.7px;height:12.275px;background:#f6f6f6"></div>
<div class="a" style="left:549.0px;top:284.125px;width:12.7px;height:12.275px;background:#f6f6f6"></div>
<div class="a" style="left:221px;top:295.4px;width:352px;height:1px;background:#dcdcdc"></div>
<div class="t" style="left:283px;top:285.9625px;font-size:8.7px;color:#e83a30;">&gt;5</div>
<div class="a" style="left:463.09999999999997px;top:286.9625px;width:6.6px;height:6.6px;border-radius:50%;background:#1e1e1e"></div>
<div class="a" style="left:488.5px;top:286.9625px;width:6.6px;height:6.6px;border-radius:50%;background:#1e1e1e"></div>
<div class="a" style="left:513.9000000000001px;top:286.9625px;width:6.6px;height:6.6px;border-radius:50%;background:#1e1e1e"></div>
<div class="a" style="left:539.3000000000001px;top:286.9625px;width:6.6px;height:6.6px;border-radius:50%;background:#1e1e1e"></div>
<div class="a" style="left:422.0px;top:296.4px;width:12.7px;height:12.275px;background:#f6f6f6"></div>
<div class="a" style="left:447.4px;top:296.4px;width:12.7px;height:12.275px;background:#f6f6f6"></div>
<div class="a" style="left:472.8px;top:296.4px;width:12.7px;height:12.275px;background:#f6f6f6"></div>
<div class="a" style="left:498.2px;top:296.4px;width:12.7px;height:12.275px;background:#f6f6f6"></div>
<div class="a" style="left:523.6px;top:296.4px;width:12.7px;height:12.275px;background:#f6f6f6"></div>
<div class="a" style="left:549.0px;top:296.4px;width:12.7px;height:12.275px;background:#f6f6f6"></div>
<div class="a" style="left:221px;top:307.67499999999995px;width:352px;height:1px;background:#dcdcdc"></div>
<div class="t" style="left:283px;top:298.23749999999995px;font-size:8.7px;color:#e83a30;">&lt;=5 &amp;&amp; lateralTargetError&gt;=-5</div>
<div class="a" style="left:425.0px;top:299.23749999999995px;width:6.6px;height:6.6px;border-radius:50%;background:#1e1e1e"></div>
<div class="a" style="left:437.7px;top:299.23749999999995px;width:6.6px;height:6.6px;border-radius:50%;background:#1e1e1e"></div>
<div class="a" style="left:422.0px;top:308.675px;width:12.7px;height:12.275px;background:#f6f6f6"></div>
<div class="a" style="left:447.4px;top:308.675px;width:12.7px;height:12.275px;background:#f6f6f6"></div>
<div class="a" style="left:472.8px;top:308.675px;width:12.7px;height:12.275px;background:#f6f6f6"></div>
<div class="a" style="left:498.2px;top:308.675px;width:12.7px;height:12.275px;background:#f6f6f6"></div>
<div class="a" style="left:523.6px;top:308.675px;width:12.7px;height:12.275px;background:#f6f6f6"></div>
<div class="a" style="left:549.0px;top:308.675px;width:12.7px;height:12.275px;background:#f6f6f6"></div>
<div class="a" style="left:221px;top:319.95px;width:352px;height:1px;background:#dcdcdc"></div>
<div class="t" style="left:283px;top:310.5125px;font-size:8.7px;color:#e83a30;">&lt;-5</div>
<div class="a" style="left:450.4px;top:311.5125px;width:6.6px;height:6.6px;border-radius:50%;background:#1e1e1e"></div>
<div class="a" style="left:475.8px;top:311.5125px;width:6.6px;height:6.6px;border-radius:50%;background:#1e1e1e"></div>
<div class="a" style="left:501.2px;top:311.5125px;width:6.6px;height:6.6px;border-radius:50%;background:#1e1e1e"></div>
<div class="a" style="left:526.6px;top:311.5125px;width:6.6px;height:6.6px;border-radius:50%;background:#1e1e1e"></div>
<div class="a" style="left:221px;top:332.225px;width:352px;height:1px;background:#dcdcdc"></div>
<div class="a" style="left:270px;top:320.95000000000005px;width:352px;height:11.775px;background:#c4c4c4"></div>
<div class="a" style="left:261px;top:323.08750000000003px;width:8px;height:8px;border:1px solid #b0b0b0;background:#f2f2f2"><div class="a" style="left:1px;top:2.5px;width:4px;height:1px;background:#555"></div></div>
<div class="a" style="left:270px;top:322.08750000000003px;width:11px;height:11px;border:1.3px solid #555;background:#f4f4f4"><div class="t" style="left:1.2px;top:0.8px;font-size:8.5px;color:#333">V</div></div>
<div class="t" style="left:284px;top:322.7875px;font-size:8.7px;color:#333;">hdgTrkUnits</div>
<div class="a" style="left:422.0px;top:333.225px;width:12.7px;height:12.275px;background:#f6f6f6"></div>
<div class="a" style="left:447.4px;top:333.225px;width:12.7px;height:12.275px;background:#f6f6f6"></div>
<div class="a" style="left:472.8px;top:333.225px;width:12.7px;height:12.275px;background:#f6f6f6"></div>
<div class="a" style="left:498.2px;top:333.225px;width:12.7px;height:12.275px;background:#f6f6f6"></div>
<div class="a" style="left:523.6px;top:333.225px;width:12.7px;height:12.275px;background:#f6f6f6"></div>
<div class="a" style="left:549.0px;top:333.225px;width:12.7px;height:12.275px;background:#f6f6f6"></div>
<div class="a" style="left:221px;top:344.5px;width:352px;height:1px;background:#dcdcdc"></div>
<div class="t" style="left:283px;top:335.0625px;font-size:8.7px;color:#333;">Hdg</div>
<div class="a" style="left:425.0px;top:336.0625px;width:6.6px;height:6.6px;border-radius:50%;background:#1e1e1e"></div>
<div class="a" style="left:450.4px;top:336.0625px;width:6.6px;height:6.6px;border-radius:50%;background:#1e1e1e"></div>
<div class="a" style="left:463.09999999999997px;top:336.0625px;width:6.6px;height:6.6px;border-radius:50%;background:#1e1e1e"></div>
<div class="a" style="left:501.2px;top:336.0625px;width:6.6px;height:6.6px;border-radius:50%;background:#1e1e1e"></div>
<div class="a" style="left:513.9000000000001px;top:336.0625px;width:6.6px;height:6.6px;border-radius:50%;background:#1e1e1e"></div>
<div class="a" style="left:552.0px;top:336.0625px;width:6.6px;height:6.6px;border-radius:50%;background:#1e1e1e"></div>
<div class="a" style="left:422.0px;top:345.5px;width:12.7px;height:12.275px;background:#f6f6f6"></div>
<div class="a" style="left:447.4px;top:345.5px;width:12.7px;height:12.275px;background:#f6f6f6"></div>
<div class="a" style="left:472.8px;top:345.5px;width:12.7px;height:12.275px;background:#f6f6f6"></div>
<div class="a" style="left:498.2px;top:345.5px;width:12.7px;height:12.275px;background:#f6f6f6"></div>
<div class="a" style="left:523.6px;top:345.5px;width:12.7px;height:12.275px;background:#f6f6f6"></div>
<div class="a" style="left:549.0px;top:345.5px;width:12.7px;height:12.275px;background:#f6f6f6"></div>
<div class="a" style="left:221px;top:356.775px;width:352px;height:1px;background:#dcdcdc"></div>
<div class="t" style="left:283px;top:347.3375px;font-size:8.7px;color:#333;">Trk</div>
<div class="a" style="left:437.7px;top:348.3375px;width:6.6px;height:6.6px;border-radius:50%;background:#1e1e1e"></div>
<div class="a" style="left:475.8px;top:348.3375px;width:6.6px;height:6.6px;border-radius:50%;background:#1e1e1e"></div>
<div class="a" style="left:488.5px;top:348.3375px;width:6.6px;height:6.6px;border-radius:50%;background:#1e1e1e"></div>
<div class="a" style="left:526.6px;top:348.3375px;width:6.6px;height:6.6px;border-radius:50%;background:#1e1e1e"></div>
<div class="a" style="left:539.3000000000001px;top:348.3375px;width:6.6px;height:6.6px;border-radius:50%;background:#1e1e1e"></div>
<div class="a" style="left:564.7px;top:348.3375px;width:6.6px;height:6.6px;border-radius:50%;background:#1e1e1e"></div>
<div class="a" style="left:221px;top:369.05px;width:352px;height:1px;background:#dcdcdc"></div>
<div class="a" style="left:251px;top:357.77500000000003px;width:352px;height:11.075000000000001px;background:#272727"></div>
<div class="a" style="left:241px;top:359.9125px;width:8px;height:8px;border:1px solid #b0b0b0;background:#f2f2f2"><div class="a" style="left:1px;top:2.5px;width:4px;height:1px;background:#555"></div></div>
<div class="t" style="left:252px;top:359.6125px;font-size:8.7px;color:#fff;font-weight:bold">OUTPUTS</div>
<div class="a" style="left:221px;top:381.325px;width:352px;height:1px;background:#dcdcdc"></div>
<div class="a" style="left:262px;top:370.05px;width:352px;height:11.775px;background:#c4c4c4"></div>
<div class="t" style="left:264px;top:371.8875px;font-size:8.7px;color:#444;font-style:italic">Output Consistency</div>
<div class="a" style="left:422px;top:371.55px;width:160px;height:9.275px;background:#e8373a"></div>
<div class="a" style="left:221px;top:393.59999999999997px;width:352px;height:1px;background:#dcdcdc"></div>
<div class="a" style="left:270px;top:382.325px;width:352px;height:11.775px;background:#c4c4c4"></div>
<div class="a" style="left:261px;top:384.4625px;width:8px;height:8px;border:1px solid #b0b0b0;background:#f2f2f2"><div class="a" style="left:1px;top:2.5px;width:4px;height:1px;background:#555"></div></div>
<div class="a" style="left:270px;top:383.4625px;width:11px;height:11px;border:1.3px solid #555;background:#f4f4f4"><div class="t" style="left:1.2px;top:0.8px;font-size:8.5px;color:#333">V</div></div>
<div class="t" style="left:284px;top:384.16249999999997px;font-size:8.7px;color:#333;">lateralAutoflightIntention</div>
<div class="a" style="left:422.0px;top:394.6px;width:12.7px;height:12.275px;background:#f6f6f6"></div>
<div class="a" style="left:447.4px;top:394.6px;width:12.7px;height:12.275px;background:#f6f6f6"></div>
<div class="a" style="left:472.8px;top:394.6px;width:12.7px;height:12.275px;background:#f6f6f6"></div>
<div class="a" style="left:498.2px;top:394.6px;width:12.7px;height:12.275px;background:#f6f6f6"></div>
<div class="a" style="left:523.6px;top:394.6px;width:12.7px;height:12.275px;background:#f6f6f6"></div>
<div class="a" style="left:549.0px;top:394.6px;width:12.7px;height:12.275px;background:#f6f6f6"></div>
<div class="a" style="left:221px;top:405.875px;width:352px;height:1px;background:#dcdcdc"></div>
<div class="t" style="left:283px;top:396.4375px;font-size:8.7px;color:#333;">Hold Heading</div>
<div class="a" style="left:425.0px;top:397.4375px;width:6.6px;height:6.6px;border-radius:50%;background:#1e1e1e"></div>
<div class="a" style="left:422.0px;top:406.875px;width:12.7px;height:12.275px;background:#f6f6f6"></div>
<div class="a" style="left:447.4px;top:406.875px;width:12.7px;height:12.275px;background:#f6f6f6"></div>
<div class="a" style="left:472.8px;top:406.875px;width:12.7px;height:12.275px;background:#f6f6f6"></div>
<div class="a" style="left:498.2px;top:406.875px;width:12.7px;height:12.275px;background:#f6f6f6"></div>
<div class="a" style="left:523.6px;top:406.875px;width:12.7px;height:12.275px;background:#f6f6f6"></div>
<div class="a" style="left:549.0px;top:406.875px;width:12.7px;height:12.275px;background:#f6f6f6"></div>
<div class="a" style="left:221px;top:418.15px;width:352px;height:1px;background:#dcdcdc"></div>
<div class="t" style="left:283px;top:408.7125px;font-size:8.7px;color:#333;">Turn Left Heading</div>
<div class="a" style="left:450.4px;top:409.7125px;width:6.6px;height:6.6px;border-radius:50%;background:#1e1e1e"></div>
<div class="a" style="left:501.2px;top:409.7125px;width:6.6px;height:6.6px;border-radius:50%;background:#1e1e1e"></div>
<div class="a" style="left:422.0px;top:419.15000000000003px;width:12.7px;height:12.275px;background:#f6f6f6"></div>
<div class="a" style="left:447.4px;top:419.15000000000003px;width:12.7px;height:12.275px;background:#f6f6f6"></div>
<div class="a" style="left:472.8px;top:419.15000000000003px;width:12.7px;height:12.275px;background:#f6f6f6"></div>
<div class="a" style="left:498.2px;top:419.15000000000003px;width:12.7px;height:12.275px;background:#f6f6f6"></div>
<div class="a" style="left:523.6px;top:419.15000000000003px;width:12.7px;height:12.275px;background:#f6f6f6"></div>
<div class="a" style="left:549.0px;top:419.15000000000003px;width:12.7px;height:12.275px;background:#f6f6f6"></div>
<div class="a" style="left:221px;top:430.425px;width:352px;height:1px;background:#dcdcdc"></div>
<div class="t" style="left:283px;top:420.9875px;font-size:8.7px;color:#333;">Turn Right Heading</div>
<div class="a" style="left:463.09999999999997px;top:421.9875px;width:6.6px;height:6.6px;border-radius:50%;background:#1e1e1e"></div>
<div class="a" style="left:513.9000000000001px;top:421.9875px;width:6.6px;height:6.6px;border-radius:50%;background:#1e1e1e"></div>
<div class="a" style="left:422.0px;top:431.425px;width:12.7px;height:12.275px;background:#f6f6f6"></div>
<div class="a" style="left:447.4px;top:431.425px;width:12.7px;height:12.275px;background:#f6f6f6"></div>
<div class="a" style="left:472.8px;top:431.425px;width:12.7px;height:12.275px;background:#f6f6f6"></div>
<div class="a" style="left:498.2px;top:431.425px;width:12.7px;height:12.275px;background:#f6f6f6"></div>
<div class="a" style="left:523.6px;top:431.425px;width:12.7px;height:12.275px;background:#f6f6f6"></div>
<div class="a" style="left:549.0px;top:431.425px;width:12.7px;height:12.275px;background:#f6f6f6"></div>
<div class="a" style="left:221px;top:442.7px;width:352px;height:1px;background:#dcdcdc"></div>
<div class="t" style="left:283px;top:433.2625px;font-size:8.7px;color:#333;">Hold Track</div>
<div class="a" style="left:437.7px;top:434.2625px;width:6.6px;height:6.6px;border-radius:50%;background:#1e1e1e"></div>
<div class="a" style="left:564.7px;top:434.2625px;width:6.6px;height:6.6px;border-radius:50%;background:#1e1e1e"></div>
<div class="a" style="left:422.0px;top:443.7px;width:12.7px;height:12.275px;background:#f6f6f6"></div>
<div class="a" style="left:447.4px;top:443.7px;width:12.7px;height:12.275px;background:#f6f6f6"></div>
<div class="a" style="left:472.8px;top:443.7px;width:12.7px;height:12.275px;background:#f6f6f6"></div>
<div class="a" style="left:498.2px;top:443.7px;width:12.7px;height:12.275px;background:#f6f6f6"></div>
<div class="a" style="left:523.6px;top:443.7px;width:12.7px;height:12.275px;background:#f6f6f6"></div>
<div class="a" style="left:549.0px;top:443.7px;width:12.7px;height:12.275px;background:#f6f6f6"></div>
<div class="a" style="left:221px;top:454.97499999999997px;width:352px;height:1px;background:#dcdcdc"></div>
<div class="t" style="left:283px;top:445.53749999999997px;font-size:8.7px;color:#333;">Turn Left Track</div>
<div class="a" style="left:475.8px;top:446.53749999999997px;width:6.6px;height:6.6px;border-radius:50%;background:#1e1e1e"></div>
<div class="a" style="left:526.6px;top:446.53749999999997px;width:6.6px;height:6.6px;border-radius:50%;background:#1e1e1e"></div>
<div class="a" style="left:422.0px;top:455.975px;width:12.7px;height:12.275px;background:#f6f6f6"></div>
<div class="a" style="left:447.4px;top:455.975px;width:12.7px;height:12.275px;background:#f6f6f6"></div>
<div class="a" style="left:472.8px;top:455.975px;width:12.7px;height:12.275px;background:#f6f6f6"></div>
<div class="a" style="left:498.2px;top:455.975px;width:12.7px;height:12.275px;background:#f6f6f6"></div>
<div class="a" style="left:523.6px;top:455.975px;width:12.7px;height:12.275px;background:#f6f6f6"></div>
<div class="a" style="left:549.0px;top:455.975px;width:12.7px;height:12.275px;background:#f6f6f6"></div>
<div class="a" style="left:221px;top:467.25px;width:352px;height:1px;background:#dcdcdc"></div>
<div class="t" style="left:283px;top:457.8125px;font-size:8.7px;color:#333;">Turn Right Track</div>
<div class="a" style="left:488.5px;top:458.8125px;width:6.6px;height:6.6px;border-radius:50%;background:#1e1e1e"></div>
<div class="a" style="left:539.3000000000001px;top:458.8125px;width:6.6px;height:6.6px;border-radius:50%;background:#1e1e1e"></div>
<div class="a" style="left:221px;top:479.525px;width:352px;height:1px;background:#dcdcdc"></div>
<div class="a" style="left:270px;top:468.25px;width:352px;height:11.775px;background:#c4c4c4"></div>
<div class="a" style="left:261px;top:470.3875px;width:8px;height:8px;border:1px solid #b0b0b0;background:#f2f2f2"><div class="a" style="left:1px;top:2.5px;width:4px;height:1px;background:#555"></div></div>
<div class="a" style="left:270px;top:469.3875px;width:11px;height:11px;border:1.3px solid #555;background:#f4f4f4"><div class="t" style="left:1.2px;top:0.8px;font-size:8.5px;color:#333">V</div></div>
<div class="t" style="left:284px;top:470.0875px;font-size:8.7px;color:#333;">selectedLateralTarget</div>
<div class="a" style="left:422.0px;top:480.52500000000003px;width:12.7px;height:12.275px;background:#f6f6f6"></div>
<div class="a" style="left:447.4px;top:480.52500000000003px;width:12.7px;height:12.275px;background:#f6f6f6"></div>
<div class="a" style="left:472.8px;top:480.52500000000003px;width:12.7px;height:12.275px;background:#f6f6f6"></div>
<div class="a" style="left:498.2px;top:480.52500000000003px;width:12.7px;height:12.275px;background:#f6f6f6"></div>
<div class="a" style="left:523.6px;top:480.52500000000003px;width:12.7px;height:12.275px;background:#f6f6f6"></div>
<div class="a" style="left:549.0px;top:480.52500000000003px;width:12.7px;height:12.275px;background:#f6f6f6"></div>
<div class="a" style="left:221px;top:491.8px;width:352px;height:1px;background:#dcdcdc"></div>
<div class="a" style="left:283px;top:481.6625px;width:11px;height:11px;border:1.3px solid #555;background:#f4f4f4"><div class="t" style="left:1.2px;top:0.8px;font-size:8.5px;color:#333">V</div></div>
<div class="t" style="left:297px;top:482.3625px;font-size:8.7px;color:#333;">lateralDirection</div>
<div class="a" style="left:552.0px;top:483.3625px;width:6.6px;height:6.6px;border-radius:50%;background:#1e1e1e"></div>
<div class="a" style="left:564.7px;top:483.3625px;width:6.6px;height:6.6px;border-radius:50%;background:#1e1e1e"></div>
<div class="a" style="left:221px;top:504.075px;width:352px;height:1px;background:#dcdcdc"></div>
<div class="a" style="left:270px;top:492.8px;width:352px;height:11.775px;background:#c4c4c4"></div>
<div class="a" style="left:261px;top:494.9375px;width:8px;height:8px;border:1px solid #b0b0b0;background:#f2f2f2"><div class="a" style="left:1px;top:2.5px;width:4px;height:1px;background:#555"></div></div>
<div class="a" style="left:270px;top:493.9375px;width:11px;height:11px;border:1.3px solid #555;background:#f4f4f4"><div class="t" style="left:1.2px;top:0.8px;font-size:8.5px;color:#333">V</div></div>
<div class="t" style="left:284px;top:494.6375px;font-size:8.7px;color:#333;">lateralTarget</div>
<div class="a" style="left:422.0px;top:505.075px;width:12.7px;height:12.275px;background:#f6f6f6"></div>
<div class="a" style="left:447.4px;top:505.075px;width:12.7px;height:12.275px;background:#f6f6f6"></div>
<div class="a" style="left:472.8px;top:505.075px;width:12.7px;height:12.275px;background:#f6f6f6"></div>
<div class="a" style="left:498.2px;top:505.075px;width:12.7px;height:12.275px;background:#f6f6f6"></div>
<div class="a" style="left:523.6px;top:505.075px;width:12.7px;height:12.275px;background:#f6f6f6"></div>
<div class="a" style="left:549.0px;top:505.075px;width:12.7px;height:12.275px;background:#f6f6f6"></div>
<div class="a" style="left:221px;top:516.35px;width:352px;height:1px;background:#dcdcdc"></div>
<div class="a" style="left:283px;top:506.2125px;width:11px;height:11px;border:1.3px solid #555;background:#f4f4f4"><div class="t" style="left:1.2px;top:0.8px;font-size:8.5px;color:#333">V</div></div>
<div class="t" style="left:297px;top:506.91249999999997px;font-size:8.7px;color:#333;">selectedLateralTarget</div>
<div class="a" style="left:501.2px;top:507.91249999999997px;width:6.6px;height:6.6px;border-radius:50%;background:#1e1e1e"></div>
<div class="a" style="left:513.9000000000001px;top:507.91249999999997px;width:6.6px;height:6.6px;border-radius:50%;background:#1e1e1e"></div>
<div class="a" style="left:526.6px;top:507.91249999999997px;width:6.6px;height:6.6px;border-radius:50%;background:#1e1e1e"></div>
<div class="a" style="left:539.3000000000001px;top:507.91249999999997px;width:6.6px;height:6.6px;border-radius:50%;background:#1e1e1e"></div>
<div class="a" style="left:422.0px;top:517.35px;width:12.7px;height:12.275px;background:#f6f6f6"></div>
<div class="a" style="left:447.4px;top:517.35px;width:12.7px;height:12.275px;background:#f6f6f6"></div>
<div class="a" style="left:472.8px;top:517.35px;width:12.7px;height:12.275px;background:#f6f6f6"></div>
<div class="a" style="left:498.2px;top:517.35px;width:12.7px;height:12.275px;background:#f6f6f6"></div>
<div class="a" style="left:523.6px;top:517.35px;width:12.7px;height:12.275px;background:#f6f6f6"></div>
<div class="a" style="left:549.0px;top:517.35px;width:12.7px;height:12.275px;background:#f6f6f6"></div>
<div class="a" style="left:221px;top:528.625px;width:352px;height:1px;background:#dcdcdc"></div>
<div class="a" style="left:283px;top:518.4875000000001px;width:11px;height:11px;border:1.3px solid #555;background:#f4f4f4"><div class="t" style="left:1.2px;top:0.8px;font-size:8.5px;color:#333">V</div></div>
<div class="t" style="left:297px;top:519.1875000000001px;font-size:8.7px;color:#333;">lateralDirection</div>
<div class="a" style="left:552.0px;top:520.1875000000001px;width:6.6px;height:6.6px;border-radius:50%;background:#1e1e1e"></div>
<div class="a" style="left:564.7px;top:520.1875000000001px;width:6.6px;height:6.6px;border-radius:50%;background:#1e1e1e"></div>
<div class="a" style="left:221px;top:540.9px;width:352px;height:1px;background:#dcdcdc"></div>
<div class="a" style="left:270px;top:529.625px;width:352px;height:11.775px;background:#c4c4c4"></div>
<div class="a" style="left:261px;top:531.7625px;width:8px;height:8px;border:1px solid #b0b0b0;background:#f2f2f2"><div class="a" style="left:1px;top:2.5px;width:4px;height:1px;background:#555"></div></div>
<div class="a" style="left:270px;top:530.7625px;width:11px;height:11px;border:1.3px solid #555;background:#f4f4f4"><div class="t" style="left:1.2px;top:0.8px;font-size:8.5px;color:#333">V</div></div>
<div class="t" style="left:284px;top:531.4625000000001px;font-size:8.7px;color:#333;">lateralTargetError</div>
<div class="a" style="left:422.0px;top:541.9000000000001px;width:12.7px;height:12.275px;background:#f6f6f6"></div>
<div class="a" style="left:447.4px;top:541.9000000000001px;width:12.7px;height:12.275px;background:#f6f6f6"></div>
<div class="a" style="left:472.8px;top:541.9000000000001px;width:12.7px;height:12.275px;background:#f6f6f6"></div>
<div class="a" style="left:498.2px;top:541.9000000000001px;width:12.7px;height:12.275px;background:#f6f6f6"></div>
<div class="a" style="left:523.6px;top:541.9000000000001px;width:12.7px;height:12.275px;background:#f6f6f6"></div>
<div class="a" style="left:549.0px;top:541.9000000000001px;width:12.7px;height:12.275px;background:#f6f6f6"></div>
<div class="a" style="left:221px;top:553.1750000000001px;width:352px;height:1px;background:#dcdcdc"></div>
<div class="t" style="left:283px;top:543.7375000000002px;font-size:8.7px;color:#333;">0</div>
<div class="a" style="left:425.0px;top:544.7375000000002px;width:6.6px;height:6.6px;border-radius:50%;background:#1e1e1e"></div>
<div class="a" style="left:437.7px;top:544.7375000000002px;width:6.6px;height:6.6px;border-radius:50%;background:#1e1e1e"></div>
<div class="a" style="left:552.0px;top:544.7375000000002px;width:6.6px;height:6.6px;border-radius:50%;background:#1e1e1e"></div>
<div class="a" style="left:564.7px;top:544.7375000000002px;width:6.6px;height:6.6px;border-radius:50%;background:#1e1e1e"></div>
<div class="a" style="left:422.0px;top:554.175px;width:12.7px;height:12.275px;background:#f6f6f6"></div>
<div class="a" style="left:447.4px;top:554.175px;width:12.7px;height:12.275px;background:#f6f6f6"></div>
<div class="a" style="left:472.8px;top:554.175px;width:12.7px;height:12.275px;background:#f6f6f6"></div>
<div class="a" style="left:498.2px;top:554.175px;width:12.7px;height:12.275px;background:#f6f6f6"></div>
<div class="a" style="left:523.6px;top:554.175px;width:12.7px;height:12.275px;background:#f6f6f6"></div>
<div class="a" style="left:549.0px;top:554.175px;width:12.7px;height:12.275px;background:#f6f6f6"></div>
<div class="a" style="left:221px;top:565.4499999999999px;width:352px;height:1px;background:#dcdcdc"></div>
<div class="a" style="left:283px;top:555.3125px;width:11px;height:11px;border:1.3px solid #555;background:#f4f4f4"><div class="t" style="left:1.2px;top:0.8px;font-size:8.5px;color:#333">V</div></div>
<div class="t" style="left:297px;top:556.0125px;font-size:8.7px;color:#333;">selectedLateralTargetError</div>
<div class="a" style="left:501.2px;top:557.0125px;width:6.6px;height:6.6px;border-radius:50%;background:#1e1e1e"></div>
<div class="a" style="left:513.9000000000001px;top:557.0125px;width:6.6px;height:6.6px;border-radius:50%;background:#1e1e1e"></div>
<div class="a" style="left:526.6px;top:557.0125px;width:6.6px;height:6.6px;border-radius:50%;background:#1e1e1e"></div>
<div class="a" style="left:539.3000000000001px;top:557.0125px;width:6.6px;height:6.6px;border-radius:50%;background:#1e1e1e"></div>
<div class="a" style="left:221px;top:577.725px;width:352px;height:1px;background:#dcdcdc"></div>
<div class="a" style="left:270px;top:566.45px;width:352px;height:11.775px;background:#c4c4c4"></div>
<div class="a" style="left:261px;top:568.5875000000001px;width:8px;height:8px;border:1px solid #b0b0b0;background:#f2f2f2"><div class="a" style="left:1px;top:2.5px;width:4px;height:1px;background:#555"></div></div>
<div class="a" style="left:270px;top:567.5875000000001px;width:11px;height:11px;border:1.3px solid #555;background:#f4f4f4"><div class="t" style="left:1.2px;top:0.8px;font-size:8.5px;color:#333">V</div></div>
<div class="t" style="left:284px;top:568.2875000000001px;font-size:8.7px;color:#333;">acBankAngle</div>
<div class="a" style="left:422.0px;top:578.725px;width:12.7px;height:12.275px;background:#f6f6f6"></div>
<div class="a" style="left:447.4px;top:578.725px;width:12.7px;height:12.275px;background:#f6f6f6"></div>
<div class="a" style="left:472.8px;top:578.725px;width:12.7px;height:12.275px;background:#f6f6f6"></div>
<div class="a" style="left:498.2px;top:578.725px;width:12.7px;height:12.275px;background:#f6f6f6"></div>
<div class="a" style="left:523.6px;top:578.725px;width:12.7px;height:12.275px;background:#f6f6f6"></div>
<div class="a" style="left:549.0px;top:578.725px;width:12.7px;height:12.275px;background:#f6f6f6"></div>
<div class="a" style="left:221px;top:590.0px;width:352px;height:1px;background:#dcdcdc"></div>
<div class="t" style="left:283px;top:580.5625000000001px;font-size:8.7px;color:#333;">0</div>
<div class="a" style="left:425.0px;top:581.5625000000001px;width:6.6px;height:6.6px;border-radius:50%;background:#1e1e1e"></div>
<div class="a" style="left:437.7px;top:581.5625000000001px;width:6.6px;height:6.6px;border-radius:50%;background:#1e1e1e"></div>
<div class="a" style="left:552.0px;top:581.5625000000001px;width:6.6px;height:6.6px;border-radius:50%;background:#1e1e1e"></div>
<div class="a" style="left:564.7px;top:581.5625000000001px;width:6.6px;height:6.6px;border-radius:50%;background:#1e1e1e"></div>
<div class="a" style="left:422.0px;top:591.0px;width:12.7px;height:12.275px;background:#f6f6f6"></div>
<div class="a" style="left:447.4px;top:591.0px;width:12.7px;height:12.275px;background:#f6f6f6"></div>
<div class="a" style="left:472.8px;top:591.0px;width:12.7px;height:12.275px;background:#f6f6f6"></div>
<div class="a" style="left:498.2px;top:591.0px;width:12.7px;height:12.275px;background:#f6f6f6"></div>
<div class="a" style="left:523.6px;top:591.0px;width:12.7px;height:12.275px;background:#f6f6f6"></div>
<div class="a" style="left:549.0px;top:591.0px;width:12.7px;height:12.275px;background:#f6f6f6"></div>
<div class="a" style="left:221px;top:602.275px;width:352px;height:1px;background:#dcdcdc"></div>
<div class="t" style="left:283px;top:592.8375000000001px;font-size:8.7px;color:#333;">22</div>
<div class="a" style="left:450.4px;top:593.8375000000001px;width:6.6px;height:6.6px;border-radius:50%;background:#1e1e1e"></div>
<div class="a" style="left:463.09999999999997px;top:593.8375000000001px;width:6.6px;height:6.6px;border-radius:50%;background:#1e1e1e"></div>
<div class="a" style="left:475.8px;top:593.8375000000001px;width:6.6px;height:6.6px;border-radius:50%;background:#1e1e1e"></div>
<div class="a" style="left:488.5px;top:593.8375000000001px;width:6.6px;height:6.6px;border-radius:50%;background:#1e1e1e"></div>
<div class="a" style="left:501.2px;top:593.8375000000001px;width:6.6px;height:6.6px;border-radius:50%;background:#1e1e1e"></div>
<div class="a" style="left:513.9000000000001px;top:593.8375000000001px;width:6.6px;height:6.6px;border-radius:50%;background:#1e1e1e"></div>
<div class="a" style="left:526.6px;top:593.8375000000001px;width:6.6px;height:6.6px;border-radius:50%;background:#1e1e1e"></div>
<div class="a" style="left:539.3000000000001px;top:593.8375000000001px;width:6.6px;height:6.6px;border-radius:50%;background:#1e1e1e"></div>
</div>
<div class="a" style="left:571px;top:100px;width:12px;height:501px;background:linear-gradient(90deg,#e6e6e6,#fbfbfb,#e6e6e6)"></div>
<svg style="left:572px;top:100px" width="10" height="501"><path d="M5 4l3 5H2z" fill="#aaa"/><path d="M2 492h6l-3 5z" fill="#aaa"/></svg>
<div class="a" style="left:573px;top:113.5px;width:9px;height:473px;border:1.3px solid #a8a8a8;border-radius:4.5px;background:linear-gradient(90deg,#f0f0f0,#fff,#e0e0e0)"></div>
<div class="a" style="left:221px;top:600px;width:350px;height:12px;background:linear-gradient(#e6e6e6,#fbfbfb,#e6e6e6)"></div>
<div class="a" style="left:221px;top:600px;width:362px;height:1px;background:#cfcfcf"></div>
<svg style="left:221px;top:600px" width="362" height="12"><path d="M5 6l5-3v6z" fill="#aaa"/><path d="M340 3l5 3-5 3z" fill="#aaa"/></svg>
<div class="a" style="left:235px;top:602px;width:322px;height:9px;border:1.3px solid #8a8a8a;border-radius:5px;background:#fafafa"></div>
<div class="a" style="left:571px;top:600px;width:12px;height:12px;background:#fff"></div>
<svg style="left:560px;top:612px" width="30" height="10"><path d="M5 7l3-3 3 3z" fill="#aaa"/><path d="M14 4h6l-3 3z" fill="#aaa"/></svg>
<div class="a" style="left:221px;top:612px;width:362px;height:108px;background:#e9e9e9"></div>
<div class="a" style="left:228px;top:622px;width:186px;height:12px;border-bottom:2px solid #555;border-right:2px solid #555;border-bottom-right-radius:2px;background:#ececec"></div>
<div class="t" style="left:228px;top:623.8px;width:186px;text-align:center;font-size:8.7px;color:#333">vsFpaConversionTable</div>
<svg style="left:402px;top:622px" width="10" height="12"><g stroke="#333" stroke-width="1" fill="none"><path d="M2 5l4-3M6 2v2M6 2H4"/><path d="M2 8l5 3M7 8l-5 3"/></g></svg>
<div class="a" style="left:416px;top:622px;width:162px;height:12px;border-bottom:2px solid #555;border-right:2px solid #555;border-bottom-right-radius:2px;background:#ececec"></div>
<div class="t" style="left:416px;top:623.8px;width:162px;text-align:center;font-size:8.7px;color:#333">lateralSystemTable</div>
<svg style="left:566px;top:622px" width="10" height="12"><g stroke="#333" stroke-width="1" fill="none"><path d="M2 5l4-3M6 2v2M6 2H4"/><path d="M2 8l5 3M7 8l-5 3"/></g></svg>
<div class="a" style="left:228px;top:634px;width:158px;height:12.3px;border-bottom:2px solid #555;border-right:2px solid #555;border-bottom-right-radius:2px;background:#ececec"></div>
<div class="t" style="left:228px;top:635.8px;width:158px;text-align:center;font-size:8.7px;color:#333">foFdSwitchActionTable</div>
<svg style="left:374px;top:634px" width="10" height="12"><g stroke="#333" stroke-width="1" fill="none"><path d="M2 5l4-3M6 2v2M6 2H4"/><path d="M2 8l5 3M7 8l-5 3"/></g></svg>
<div class="a" style="left:388px;top:634px;width:190px;height:12.3px;border-bottom:2px solid #555;border-right:2px solid #555;border-bottom-right-radius:2px;background:#ececec"></div>
<div class="t" style="left:388px;top:635.8px;width:190px;text-align:center;font-size:8.7px;color:#333">captainsFdSwitchActionTable</div>
<svg style="left:566px;top:634px" width="10" height="12"><g stroke="#333" stroke-width="1" fill="none"><path d="M2 5l4-3M6 2v2M6 2H4"/><path d="M2 8l5 3M7 8l-5 3"/></g></svg>
<div class="a" style="left:228px;top:646.5px;width:147px;height:12.3px;border-bottom:2px solid #555;border-right:2px solid #555;border-bottom-right-radius:2px;background:#ececec"></div>
<div class="t" style="left:228px;top:648.3px;width:147px;text-align:center;font-size:8.7px;color:#333">verticalFeedbackTable</div>
<svg style="left:363px;top:646.5px" width="10" height="12"><g stroke="#333" stroke-width="1" fill="none"><path d="M2 5l4-3M6 2v2M6 2H4"/><path d="M2 8l5 3M7 8l-5 3"/></g></svg>
<div class="a" style="left:377px;top:646.5px;width:201px;height:12.3px;border-bottom:2px solid #555;border-right:2px solid #555;border-bottom-right-radius:2px;background:#ececec"></div>
<div class="t" style="left:377px;top:648.3px;width:201px;text-align:center;font-size:8.7px;color:#333">lateralTargetDecreaseActionTable</div>
<svg style="left:566px;top:646.5px" width="10" height="12"><g stroke="#333" stroke-width="1" fill="none"><path d="M2 5l4-3M6 2v2M6 2H4"/><path d="M2 8l5 3M7 8l-5 3"/></g></svg>
<div class="a" style="left:228px;top:659px;width:142px;height:12.3px;border-bottom:2px solid #555;border-right:2px solid #555;border-bottom-right-radius:2px;background:#ececec"></div>
<div class="t" style="left:228px;top:660.8px;width:142px;text-align:center;font-size:8.7px;color:#333">verticalSystemTable</div>
<svg style="left:358px;top:659px" width="10" height="12"><g stroke="#333" stroke-width="1" fill="none"><path d="M2 5l4-3M6 2v2M6 2H4"/><path d="M2 8l5 3M7 8l-5 3"/></g></svg>
<div class="a" style="left:372px;top:659px;width:206px;height:12.3px;border-bottom:2px solid #555;border-right:2px solid #555;border-bottom-right-radius:2px;background:#ececec"></div>
<div class="t" style="left:372px;top:660.8px;width:206px;text-align:center;font-size:8.7px;color:#333">lateralTargetIncreaseActionTable</div>
<svg style="left:566px;top:659px" width="10" height="12"><g stroke="#333" stroke-width="1" fill="none"><path d="M2 5l4-3M6 2v2M6 2H4"/><path d="M2 8l5 3M7 8l-5 3"/></g></svg>
<div class="a" style="left:228px;top:671px;width:91px;height:12.3px;border-bottom:2px solid #555;border-right:2px solid #555;border-bottom-right-radius:2px;background:#ececec"></div>
<div class="t" style="left:228px;top:672.8px;width:91px;text-align:center;font-size:8.7px;color:#333">feedbackTable</div>
<svg style="left:307px;top:671px" width="10" height="12"><g stroke="#333" stroke-width="1" fill="none"><path d="M2 5l4-3M6 2v2M6 2H4"/><path d="M2 8l5 3M7 8l-5 3"/></g></svg>
<div class="a" style="left:321px;top:671px;width:84px;height:12.3px;border-bottom:2px solid #555;border-right:2px solid #555;border-bottom-right-radius:2px;background:#ececec"></div>
<div class="t" style="left:321px;top:672.8px;width:84px;text-align:center;font-size:8.7px;color:#333">systemTable</div>
<svg style="left:393px;top:671px" width="10" height="12"><g stroke="#333" stroke-width="1" fill="none"><path d="M2 5l4-3M6 2v2M6 2H4"/><path d="M2 8l5 3M7 8l-5 3"/></g></svg>
<div class="a" style="left:407px;top:671px;width:171px;height:12.3px;border-bottom:2px solid #555;border-right:2px solid #555;border-bottom-right-radius:2px;background:#ececec"></div>
<div class="t" style="left:407px;top:672.8px;width:171px;text-align:center;font-size:8.7px;color:#333">altitudeTargetDecreaseActionTable</div>
<svg style="left:566px;top:671px" width="10" height="12"><g stroke="#333" stroke-width="1" fill="none"><path d="M2 5l4-3M6 2v2M6 2H4"/><path d="M2 8l5 3M7 8l-5 3"/></g></svg>
<div class="a" style="left:228px;top:683px;width:236px;height:12.3px;border-bottom:2px solid #555;border-right:2px solid #555;border-bottom-right-radius:2px;background:#ececec"></div>
<div class="t" style="left:228px;top:684.8px;width:236px;text-align:center;font-size:8.7px;color:#333">mcpVertKnobPressedActionTable</div>
<svg style="left:452px;top:683px" width="10" height="12"><g stroke="#333" stroke-width="1" fill="none"><path d="M2 5l4-3M6 2v2M6 2H4"/><path d="M2 8l5 3M7 8l-5 3"/></g></svg>
<div class="a" style="left:466px;top:683px;width:112px;height:12.3px;border-bottom:2px solid #555;border-right:2px solid #555;border-bottom-right-radius:2px;background:#ececec"></div>
<div class="t" style="left:466px;top:684.8px;width:112px;text-align:center;font-size:8.7px;color:#333">actionTable</div>
<svg style="left:566px;top:683px" width="10" height="12"><g stroke="#333" stroke-width="1" fill="none"><path d="M2 5l4-3M6 2v2M6 2H4"/><path d="M2 8l5 3M7 8l-5 3"/></g></svg>
<div class="a" style="left:228px;top:695px;width:350px;height:12.3px;border-bottom:2px solid #555;border-right:2px solid #555;border-bottom-right-radius:2px;background:#ececec"></div>
<div class="t" style="left:228px;top:696.8px;width:350px;text-align:center;font-size:8.7px;color:#333">selectedVerticalRateTargetIncreaseActionTable</div>
<svg style="left:566px;top:695px" width="10" height="12"><g stroke="#333" stroke-width="1" fill="none"><path d="M2 5l4-3M6 2v2M6 2H4"/><path d="M2 8l5 3M7 8l-5 3"/></g></svg>
<div class="a" style="left:228px;top:707.5px;width:221px;height:12.3px;border-bottom:2px solid #555;border-right:2px solid #555;border-bottom-right-radius:2px;background:#ececec"></div>
<div class="t" style="left:228px;top:709.3px;width:221px;text-align:center;font-size:8.7px;color:#333">vsFpaToggleUnitsActionTable</div>
<svg style="left:437px;top:707.5px" width="10" height="12"><g stroke="#333" stroke-width="1" fill="none"><path d="M2 5l4-3M6 2v2M6 2H4"/><path d="M2 8l5 3M7 8l-5 3"/></g></svg>
<div class="a" style="left:451px;top:707.5px;width:127px;height:12.3px;border-bottom:2px solid #555;border-right:2px solid #555;border-bottom-right-radius:2px;background:#ececec"></div>
<div class="t" style="left:451px;top:709.3px;width:127px;text-align:center;font-size:8.7px;color:#333">topLogicTable</div>
<svg style="left:566px;top:707.5px" width="10" height="12"><g stroke="#333" stroke-width="1" fill="none"><path d="M2 5l4-3M6 2v2M6 2H4"/><path d="M2 8l5 3M7 8l-5 3"/></g></svg>
<svg style="left:405px;top:612px" width="10" height="8"><path d="M2 6l3-4 3 4" stroke="#333" fill="none"/></svg>
<div class="a" style="left:585.5px;top:39px;width:694.5px;height:681px;background:#e9e9e9"></div>
<div class="a" style="left:585.5px;top:39px;width:2px;height:681px;background:#607088"></div>
<div class="a" style="left:588px;top:39px;width:692px;height:17px;background:linear-gradient(#f4f4f4,#e0e0e0)"></div>
<div class="a" style="left:588px;top:55px;width:692px;height:1px;background:#a9a9a9"></div>
<div class="a" style="left:593px;top:41.5px;width:12px;height:12px;border-radius:50%;background:radial-gradient(circle at 50% 35%,#ff8a8a,#d42a2a 75%);border:1px solid #8a6a6a"></div>
<div class="a" style="left:610px;top:41.5px;width:12px;height:12px;border-radius:50%;background:radial-gradient(circle at 50% 35%,#ffd27a,#e08a10 75%);border:1px solid #8a6a6a"></div>
<div class="a" style="left:627px;top:41.5px;width:12px;height:12px;border-radius:50%;background:radial-gradient(circle at 50% 35%,#a8f08a,#3aa82a 75%);border:1px solid #8a6a6a"></div>
<div class="t" style="left:882px;top:42px;font-size:11.3px;color:#333;">User Interface Editor</div>
<div class="a" style="left:588px;top:56px;width:692px;height:23px;background:#ededed"></div>
<div class="a" style="left:588px;top:78px;width:692px;height:2px;background:linear-gradient(#b0b0b0,#cfcfcf)"></div>
<svg style="left:589px;top:61px" width="7" height="16"><g stroke="#333" stroke-width="1.3"><path d="M0 5l6 -5"/><path d="M0 8l6 -5"/><path d="M0 11l6 -5"/><path d="M0 14l6 -5"/><path d="M0 17l6 -5"/></g></svg>
<div class="btn" style="left:597px;top:59px;width:33px;height:17px;background:#f9f9f9;border-color:#b0b0b0"></div>
<div class="t" style="left:600px;top:64px;font-size:8.5px;color:#333;">Add &gt;&gt;</div>
<div class="btn" style="left:632px;top:59px;width:17px;height:17px;border-color:#d8d8d8"></div>
<div class="btn" style="left:651px;top:59px;width:17px;height:17px;border-color:#d8d8d8"></div>
<div class="btn" style="left:670px;top:59px;width:17px;height:17px;border-color:#d8d8d8"></div>
<svg style="left:0;top:0" width="700" height="80"><g fill="#a9a9a9"><path d="M636 64h9l-1 10h-7z"/><rect x="635" y="62" width="11" height="1.5"/><rect x="654" y="62" width="6" height="5"/><rect x="658" y="66" width="6" height="5"/><rect x="673" y="62" width="6" height="5"/><rect x="677" y="66" width="6" height="5"/></g></svg>
<div class="a" style="left:588px;top:80px;width:678px;height:632px;background:#fff"></div>
<div class="a" style="left:587.5px;top:80px;width:1.5px;height:632px;background:#e2e2e2"></div>
<div class="a" style="left:589px;top:80px;width:2px;height:632px;background:#b4b4b4"></div>
<div class="a" style="left:592px;top:81px;width:674px;height:1.2px;background:#c0c4e4"></div>
<div class="a" style="left:592px;top:81px;width:1.6px;height:631px;background:#a8acd8"></div>
<div class="a" style="left:1266px;top:80px;width:11px;height:632px;background:linear-gradient(90deg,#dcdcdc,#f8f8f8,#dcdcdc)"></div>
<div class="a" style="left:1277px;top:39px;width:3px;height:681px;background:linear-gradient(90deg,#c8c8c8,#8898b8)"></div>
<svg style="left:1266px;top:80px" width="14" height="640"><path d="M5.5 4l3.5 6h-7z" fill="#333"/><path d="M2.5 622h6l-3 6z" fill="#333"/></svg>
<div class="a" style="left:1266.5px;top:93px;width:10px;height:599px;background:linear-gradient(90deg,#3a6fc0,#a8d4f8 45%,#5a96dc);border-radius:6px;border:1px solid #4a70a8"></div>
<div class="a" style="left:591px;top:711.5px;width:689px;height:8.5px;background:linear-gradient(#dcdcdc,#f8f8f8)"></div>
<div class="a" style="left:603px;top:712px;width:488px;height:10px;background:linear-gradient(#3a6fc0,#a8d4f8 45%,#5a96dc);border-radius:6px;border:1px solid #4a70a8"></div>
<svg style="left:587px;top:711px" width="693" height="12"><path d="M8 7.5l5-3v6z" fill="#333"/><path d="M671 4.5l5 3-5 3z" fill="#333"/></svg>
<svg style="left:0;top:0" width="1280" height="720" font-family="Liberation Sans">
<defs>
<radialGradient id="gk" cx="40%" cy="35%" r="70%"><stop offset="0" stop-color="#ffffff"/><stop offset="0.6" stop-color="#ece8e0"/><stop offset="1" stop-color="#a9a396"/></radialGradient>
<linearGradient id="gw" x1="0" x2="1"><stop offset="0" stop-color="#4a4a4a"/><stop offset="0.3" stop-color="#e8e8e8"/><stop offset="0.6" stop-color="#fafafa"/><stop offset="1" stop-color="#5a5a5a"/></linearGradient>
<clipPath id="mcpclip"><rect x="596" y="85" width="670" height="146"/></clipPath>
</defs>
<path d="M1266 82.5H592.5V235H1266" fill="none" stroke="#9aa0d8" stroke-width="1.2"/>
<g clip-path="url(#mcpclip)">
<rect x="596" y="85.5" width="676" height="145.5" fill="#a98767"/>
<rect x="596" y="85.5" width="676" height="2" fill="#b39272"/>
<path d="M596.5 231V86h676" fill="none" stroke="#6a6a80" stroke-width="1.2"/>
<rect x="630" y="92.3" width="175.4" height="94.2" fill="#6e5a44"/>
<rect x="635.7" y="97.9" width="164.2" height="83.8" fill="#272525"/>
<rect x="635.7" y="131" width="164.2" height="1" fill="#3a3838"/>
<rect x="635.5" y="98.5" width="57" height="15.5" fill="none" stroke="#4a4aa0" stroke-width="1" opacity="0.6"/>
<rect x="740" y="100" width="57" height="14" fill="none" stroke="#4a4aa0" stroke-width="1" opacity="0.6"/>
<rect x="636" y="114.5" width="162" height="5" fill="none" stroke="#4a4aa0" stroke-width="0.8" opacity="0.6"/>
<text x="636" y="111.2" font-size="12.2" fill="#58c858" font-weight="bold" text-anchor="start" >Heading</text>
<text x="792.5" y="112.2" font-size="14.5" fill="#e4409a" font-weight="normal" text-anchor="end" stroke="#e4409a" stroke-width="0.4">180</text>
<path d="M636 117.3 q2.95 -3.2 5.9 0 q2.95 3.2 5.9 0 q2.95 -3.2 5.9 0 q2.95 3.2 5.9 0 q2.95 -3.2 5.9 0 q2.95 3.2 5.9 0 q2.95 -3.2 5.9 0 q2.95 3.2 5.9 0 q2.95 -3.2 5.9 0 q2.95 3.2 5.9 0 q2.95 -3.2 5.9 0 q2.95 3.2 5.9 0 q2.95 -3.2 5.9 0 q2.95 3.2 5.9 0 q2.95 -3.2 5.9 0 q2.95 3.2 5.9 0 q2.95 -3.2 5.9 0 q2.95 3.2 5.9 0 q2.95 -3.2 5.9 0 q2.95 3.2 5.9 0 q2.95 -3.2 5.9 0 q2.95 3.2 5.9 0 q2.95 -3.2 5.9 0 q2.95 3.2 5.9 0 q2.95 -3.2 5.9 0 q2.95 3.2 5.9 0 q2.95 -3.2 5.9 0 q2.95 3.2 5.9 0" fill="none" stroke="#e8e8e8" stroke-width="1.3"/>
<rect x="636" y="120" width="40" height="11" fill="none" stroke="#4a4aa0" stroke-width="1" opacity="0.6"/>
<rect x="677" y="119.5" width="15" height="12" fill="none" stroke="#6a6ab0" stroke-width="1.2" opacity="0.6"/>
<rect x="677.5" y="120" width="14" height="11" fill="#3a3a48"/>
<text x="638" y="128.6" font-size="10.3" fill="#f0f0f0" font-weight="bold" text-anchor="start" >&lt;Link</text>
<text x="679" y="128.6" font-size="8.8" fill="#f0f0f0" font-weight="bold" text-anchor="start" >FP</text>
<rect x="636" y="135" width="8" height="12" fill="none" stroke="#4a4aa0" stroke-width="1" opacity="0.6"/>
<rect x="643" y="135" width="22" height="12" fill="none" stroke="#4a4aa0" stroke-width="1" opacity="0.6"/>
<rect x="679" y="135" width="29" height="12" fill="none" stroke="#4a4aa0" stroke-width="1" opacity="0.6"/>
<text x="636.5" y="144.3" font-size="10" fill="#fff" font-weight="bold" text-anchor="start" >&lt;</text>
<text x="643.5" y="144.3" font-size="10" fill="#58c858" font-weight="bold" text-anchor="start" >Hdg</text>
<text x="664.5" y="144.3" font-size="9.5" fill="#fff" font-weight="bold" text-anchor="start" >&lt;&gt;</text>
<text x="681" y="144.3" font-size="9" fill="#fff" font-weight="bold" text-anchor="start" >Trk</text>
<rect x="726" y="165" width="17" height="17" fill="none" stroke="#4a4aa0" stroke-width="1" opacity="0.6"/>
<rect x="744" y="165" width="25" height="17" fill="none" stroke="#4a4aa0" stroke-width="1" opacity="0.6"/>
<rect x="771" y="165" width="28" height="17" fill="none" stroke="#4a4aa0" stroke-width="1" opacity="0.6"/>
<circle cx="605.8" cy="95.1" r="5.2" fill="#9a7250" stroke="#5a3e28" stroke-width="1.3"/><path d="M603.8 92.6v5M607.8 92.6v5M602.8 95.1h6" stroke="#5a3e28" stroke-width="0.9"/>
<circle cx="612.8" cy="116.6" r="15" fill="#efe2c8"/><circle cx="612.8" cy="116.6" r="12.5" fill="#b9b4aa"/><circle cx="612.8" cy="116.6" r="11" fill="#8a8782"/><circle cx="612.8" cy="116.6" r="8.5" fill="#3c3b3a"/>
<rect x="609" y="133" width="19" height="14" fill="none" stroke="#5a5a9a" stroke-width="1"/>
<rect x="611" y="135" width="15" height="10" rx="2" fill="#2a2a2a"/><rect x="614" y="139" width="9" height="2" fill="#ddd"/>
<circle cx="613" cy="168.7" r="15" fill="#efe2c8"/><circle cx="613" cy="168.7" r="12.5" fill="#3a3530"/><circle cx="613" cy="168.7" r="9.5" fill="#f4f2ee"/>
<circle cx="624.0" cy="168.7" r="1.1" fill="#aaa"/>
<circle cx="620.8" cy="176.5" r="1.1" fill="#aaa"/>
<circle cx="613.0" cy="179.7" r="1.1" fill="#aaa"/>
<circle cx="605.2" cy="176.5" r="1.1" fill="#aaa"/>
<circle cx="602.0" cy="168.7" r="1.1" fill="#aaa"/>
<circle cx="605.2" cy="160.9" r="1.1" fill="#aaa"/>
<circle cx="613.0" cy="157.7" r="1.1" fill="#aaa"/>
<circle cx="620.8" cy="160.9" r="1.1" fill="#aaa"/>
<path d="M598 193h81v38" fill="none" stroke="#ecdcc0" stroke-width="1.6"/>
<rect x="627" y="199" width="20" height="20" fill="#8f8a78" stroke="#6a6aa0" stroke-width="1"/><path d="M633 202h8l-4 7z" fill="#eee"/><circle cx="637" cy="210" r="3.5" fill="#222"/>
<circle cx="609.5" cy="219.5" r="5" fill="#9a7250" stroke="#5a3e28" stroke-width="1.3"/><path d="M607.5 217.0v5M611.5 217.0v5M606.5 219.5h6" stroke="#5a3e28" stroke-width="0.9"/>
<text x="689.5" y="210.5" font-size="8.5" fill="#f4ecdc" font-weight="bold" text-anchor="start" >LAT</text>
<path d="M685 217.5h26M685 217.5l4-2.5M685 217.5l4 2.5M711 217.5l-4-2.5M711 217.5l-4 2.5" stroke="#f4ecdc" stroke-width="1.6" fill="none"/>
<circle cx="706" cy="200" r="1.5" fill="#ffe040"/><circle cx="706" cy="223" r="1.5" fill="#ffe040"/>
<rect x="700" y="188" width="13" height="43" fill="none" stroke="#4a4aa0" stroke-width="1" opacity="0.6"/>
<rect x="700" y="211" width="13" height="0.1" fill="none" stroke="#4a4aa0" stroke-width="1" opacity="0.6"/>
<rect x="713" y="188" width="54" height="43" fill="none" stroke="#4a4aa0" stroke-width="1" opacity="0.6"/>
<circle cx="739.5" cy="213.5" r="23.5" fill="#2a221c"/><circle cx="737.5" cy="211.5" r="22.5" fill="#f4f2ee"/>
<path d="M752 196a22 22 0 0 1 5 30a22 22 0 0 1-30 6" fill="none" stroke="#c8c4bc" stroke-width="3"/>
<path d="M737.5 192.0L742.1 200.4L751.3 197.7L748.6 206.9L757.0 211.5L748.6 216.1L751.3 225.3L742.1 222.6L737.5 231.0L732.9 222.6L723.7 225.3L726.4 216.1L718.0 211.5L726.4 206.9L723.7 197.7L732.9 200.4z" fill="#f8f7f4" stroke="#8a8580" stroke-width="0.9"/>
<circle cx="737.5" cy="211.5" r="9.5" fill="#fdfdfc"/><path d="M744 222a12 12 0 0 1-14 1" stroke="#9a958e" stroke-width="2" fill="none"/>
<rect x="770" y="192" width="36" height="35" rx="2" fill="#1c1c1c"/>
<rect x="773" y="195" width="30" height="29" rx="2.5" fill="#2c3838" stroke="#627272" stroke-width="1.3"/>
<text x="788.0" y="213.28" font-size="10.5" fill="#d4dcdc" font-weight="normal" text-anchor="middle" textLength="19" lengthAdjust="spacingAndGlyphs">HOLD</text>
<rect x="810.5" y="88" width="2.5" height="141" fill="#ecdcc0"/>
<rect x="824" y="94" width="36" height="35" rx="2" fill="#1c1c1c"/>
<rect x="827" y="97" width="30" height="29" rx="2.5" fill="#2c3838" stroke="#627272" stroke-width="1.3"/>
<text x="842.0" y="111.28" font-size="10.5" fill="#d4dcdc" font-weight="normal" text-anchor="middle" textLength="13" lengthAdjust="spacingAndGlyphs">A/T</text>
<path d="M834.0 118 l1 -1.2 l1 1.2 l1 -1.2 l1 1.2 l1 -1.2 l1 1.2 l1 -1.2 l1 1.2 l1 -1.2 l1 1.2 l1 -1.2 l1 1.2 l1 -1.2 l1 1.2 l1 -1.2 l1 1.2" fill="none" stroke="#e4eaea" stroke-width="1.6"/>
<text x="817.5" y="143.5" font-size="7.4" fill="#f2e8d8" font-weight="bold" text-anchor="start" >PAX</text>
<text x="814" y="151" font-size="7.4" fill="#f2e8d8" font-weight="bold" text-anchor="start" >COMF</text>
<text x="850" y="151" font-size="7.4" fill="#f2e8d8" font-weight="bold" text-anchor="start" >PERF</text>
<path d="M843 155v-8M851 154l5-6" stroke="#f2e8d8" stroke-width="1.3"/>
<circle cx="846" cy="169.5" r="11.5" fill="#3a2e24" opacity="0.75"/>
<circle cx="842" cy="165.5" r="11.5" fill="url(#gk)" stroke="#6a5a4a" stroke-width="0.8"/>
<path d="M842 165l-11-10" stroke="#222" stroke-width="2"/>
<rect x="818" y="187" width="48" height="35" rx="2" fill="#1c1c1c"/>
<rect x="821" y="190" width="42" height="29" rx="2.5" fill="#2c3838" stroke="#627272" stroke-width="1.3"/>
<text x="842.0" y="204.28" font-size="10.5" fill="#d4dcdc" font-weight="normal" text-anchor="middle" textLength="37" lengthAdjust="spacingAndGlyphs">AUTO FLT</text>
<path d="M828.0 211 l1 -1.2 l1 1.2 l1 -1.2 l1 1.2 l1 -1.2 l1 1.2 l1 -1.2 l1 1.2 l1 -1.2 l1 1.2 l1 -1.2 l1 1.2 l1 -1.2 l1 1.2 l1 -1.2 l1 1.2 l1 -1.2 l1 1.2 l1 -1.2 l1 1.2 l1 -1.2 l1 1.2 l1 -1.2 l1 1.2 l1 -1.2 l1 1.2 l1 -1.2 l1 1.2" fill="none" stroke="#e4eaea" stroke-width="1.6"/>
<rect x="870" y="108" width="2.5" height="120" fill="#ecdcc0"/>
<circle cx="876" cy="98" r="4.5" fill="#9a7250" stroke="#5a3e28" stroke-width="1.3"/><path d="M874 95.5v5M878 95.5v5M873 98h6" stroke="#5a3e28" stroke-width="0.9"/>
<rect x="872" y="100" width="11" height="12" fill="none" stroke="#4a4aa0" stroke-width="1" opacity="0.6"/>
<path d="M889 124v10a6 6 0 0 0 6 6h15" stroke="#eadcc0" stroke-width="7" fill="none"/>
<path d="M889 124v10a6 6 0 0 0 6 6h15" stroke="#c9b89a" stroke-width="3" fill="none"/>
<circle cx="896" cy="117" r="13.5" fill="#efe2c8"/><circle cx="896" cy="117" r="10.5" fill="#9a9690"/><circle cx="896" cy="117" r="8" fill="#353433"/>
<path d="M886 172v-7a8 8 0 0 1 6-8" stroke="#eadcc0" stroke-width="5" fill="none"/>
<rect x="879" y="151" width="30" height="13" fill="none" stroke="#4a4aa0" stroke-width="1" opacity="0.6"/>
<rect x="892" y="152.5" width="16" height="11" rx="2" fill="#2a2a2a"/><rect x="895" y="157" width="10" height="2" fill="#ddd"/>
<rect x="877" y="169" width="23" height="48" fill="none" stroke="#4a4aa0" stroke-width="1" opacity="0.6"/>
<rect x="880" y="172" width="19" height="42" rx="3" fill="#222"/><rect x="882" y="174" width="15" height="38" rx="2" fill="url(#gw)"/>
<path d="M889.5 178v4M887.5 180h4" stroke="#e8d840" stroke-width="1"/><rect x="887" y="199" width="5" height="1.2" fill="#e8d840"/>
<path d="M883 185h13M883 189h13M883 204h13" stroke="#888" stroke-width="0.8"/><path d="M880 193h19" stroke="#5a5aa0" stroke-width="1"/>
<rect x="910.3" y="92.4" width="172.7" height="94" fill="#6e5a44"/>
<rect x="915" y="97" width="165" height="85" fill="#272525"/>
<rect x="915" y="131" width="165" height="1" fill="#3a3838"/>
<rect x="916" y="98.5" width="60" height="16" fill="none" stroke="#4a4aa0" stroke-width="1" opacity="0.6"/>
<rect x="978" y="98.5" width="24" height="16" fill="none" stroke="#4a4aa0" stroke-width="1" opacity="0.6"/>
<rect x="1003" y="98.5" width="14" height="16" fill="none" stroke="#4a4aa0" stroke-width="1" opacity="0.6"/>
<rect x="1023" y="98.5" width="4" height="16" fill="none" stroke="#4a4aa0" stroke-width="1" opacity="0.6"/>
<rect x="1028" y="98.5" width="12" height="16" fill="none" stroke="#4a4aa0" stroke-width="1" opacity="0.6"/>
<rect x="1042" y="98.5" width="38" height="16" fill="none" stroke="#4a4aa0" stroke-width="1" opacity="0.6"/>
<rect x="916" y="114.5" width="164" height="4.5" fill="none" stroke="#4a4aa0" stroke-width="0.8" opacity="0.6"/>
<text x="920" y="111.5" font-size="12.2" fill="#58c858" font-weight="bold" text-anchor="start" >Alt</text>
<text x="1079.5" y="111.8" font-size="13.5" fill="#e4409a" font-weight="normal" text-anchor="end" stroke="#e4409a" stroke-width="0.3">5000</text>
<path d="M916 117 q2.95 -3.2 5.9 0 q2.95 3.2 5.9 0 q2.95 -3.2 5.9 0 q2.95 3.2 5.9 0 q2.95 -3.2 5.9 0 q2.95 3.2 5.9 0 q2.95 -3.2 5.9 0 q2.95 3.2 5.9 0 q2.95 -3.2 5.9 0 q2.95 3.2 5.9 0 q2.95 -3.2 5.9 0 q2.95 3.2 5.9 0 q2.95 -3.2 5.9 0 q2.95 3.2 5.9 0 q2.95 -3.2 5.9 0 q2.95 3.2 5.9 0 q2.95 -3.2 5.9 0 q2.95 3.2 5.9 0 q2.95 -3.2 5.9 0 q2.95 3.2 5.9 0 q2.95 -3.2 5.9 0 q2.95 3.2 5.9 0 q2.95 -3.2 5.9 0 q2.95 3.2 5.9 0 q2.95 -3.2 5.9 0 q2.95 3.2 5.9 0 q2.95 -3.2 5.9 0 q2.95 3.2 5.9 0" fill="none" stroke="#e8e8e8" stroke-width="1.3"/>
<rect x="916" y="120" width="36" height="11" fill="none" stroke="#4a4aa0" stroke-width="1" opacity="0.6"/>
<rect x="950.5" y="119.5" width="15" height="12" fill="#3a3a48" stroke="#6a6ab0" stroke-width="1.2"/>
<text x="917" y="128.6" font-size="10.3" fill="#f0f0f0" font-weight="bold" text-anchor="start" >&lt;Link</text>
<text x="952.5" y="128.6" font-size="8.8" fill="#f0f0f0" font-weight="bold" text-anchor="start" >FP</text>
<rect x="1018" y="134" width="59" height="14" fill="none" stroke="#4a4aa0" stroke-width="1" opacity="0.6"/>
<text x="1022" y="145.3" font-size="11.2" fill="#5ac8d8" font-weight="bold" text-anchor="start" >Driftdown</text>
<rect x="915.5" y="153" width="10" height="15" fill="none" stroke="#4a4aa0" stroke-width="1" opacity="0.6"/>
<rect x="925" y="151" width="22" height="16" fill="none" stroke="#4a4aa0" stroke-width="1" opacity="0.6"/>
<rect x="949" y="152" width="10" height="14" fill="none" stroke="#4a4aa0" stroke-width="1" opacity="0.6"/>
<rect x="961" y="152" width="22" height="15" fill="none" stroke="#4a4aa0" stroke-width="1" opacity="0.6"/>
<text x="916" y="164.5" font-size="12" fill="#fff" font-weight="bold" text-anchor="start" >&lt;</text>
<text x="925.5" y="165" font-size="13" fill="#fff" font-weight="bold" text-anchor="start" >VS</text>
<text x="946.5" y="164.2" font-size="10" fill="#fff" font-weight="bold" text-anchor="start" >&lt;&gt;</text>
<text x="961.5" y="164.2" font-size="9.3" fill="#fff" font-weight="bold" text-anchor="start" >FPA</text>
<rect x="1007.5" y="166" width="26" height="16" fill="none" stroke="#4a4aa0" stroke-width="1" opacity="0.6"/>
<rect x="1034" y="166" width="4" height="16" fill="none" stroke="#4a4aa0" stroke-width="1" opacity="0.6"/>
<rect x="1039" y="166" width="16" height="16" fill="none" stroke="#4a4aa0" stroke-width="1" opacity="0.6"/>
<rect x="1055" y="166" width="24" height="16" fill="none" stroke="#4a4aa0" stroke-width="1" opacity="0.6"/>
<circle cx="1096" cy="99" r="4.5" fill="#9a7250" stroke="#5a3e28" stroke-width="1.3"/><path d="M1094 96.5v5M1098 96.5v5M1093 99h6" stroke="#5a3e28" stroke-width="0.9"/>
<rect x="1088" y="137.5" width="16" height="11" rx="2" fill="#2a2a2a"/><rect x="1091" y="142.0" width="10" height="2" fill="#ddd"/>
<rect x="1088" y="155.5" width="16" height="11" rx="2" fill="#2a2a2a"/><rect x="1091" y="160.0" width="10" height="2" fill="#ddd"/>
<rect x="1105.6" y="92.3" width="170" height="94" fill="#6e5a44"/>
<rect x="1110" y="97" width="170" height="85" fill="#272525"/>
<rect x="1111" y="97.5" width="31.5" height="13" fill="none" stroke="#4a4aa0" stroke-width="1" opacity="0.6"/>
<rect x="1142.5" y="97.5" width="35.5" height="32" fill="none" stroke="#4a4aa0" stroke-width="1" opacity="0.6"/>
<rect x="1178" y="97.5" width="24" height="13" fill="none" stroke="#4a4aa0" stroke-width="1" opacity="0.6"/>
<rect x="1178" y="117.5" width="24" height="12" fill="none" stroke="#4a4aa0" stroke-width="1" opacity="0.6"/>
<rect x="1111" y="117.5" width="31.5" height="12" fill="none" stroke="#4a4aa0" stroke-width="1" opacity="0.6"/>
<rect x="1202" y="97.5" width="0.1" height="32" fill="none" stroke="#4a4aa0" stroke-width="1" opacity="0.6"/>
<text x="1112" y="106.8" font-size="9.5" fill="#f4f4f4" font-weight="bold" text-anchor="start" >Thrust</text>
<text x="1112" y="127" font-size="9.5" fill="#f4f4f4" font-weight="bold" text-anchor="start" >Pitch</text>
<path d="M1145 102h31M1145 124h31" stroke="#eee" stroke-width="1"/><path d="M1178 102l-4-2v4zM1178 124l-4-2v4z" fill="#eee"/>
<text x="1180" y="107" font-size="9.3" fill="#eee" font-weight="normal" text-anchor="start" >Spd</text>
<text x="1180" y="127.5" font-size="9.3" fill="#eee" font-weight="normal" text-anchor="start" >Alt</text>
<rect x="1208" y="98.5" width="20" height="16" fill="none" stroke="#4a4aa0" stroke-width="1" opacity="0.6"/>
<rect x="1230" y="98.5" width="40" height="16" fill="none" stroke="#4a4aa0" stroke-width="1" opacity="0.6"/>
<text x="1242" y="113" font-size="16.5" fill="#e4409a" font-weight="normal" text-anchor="start" stroke="#e4409a" stroke-width="0.4">250</text>
<path d="M1210 116.5 q2.95 -3.2 5.9 0 q2.95 3.2 5.9 0 q2.95 -3.2 5.9 0 q2.95 3.2 5.9 0 q2.95 -3.2 5.9 0 q2.95 3.2 5.9 0 q2.95 -3.2 5.9 0 q2.95 3.2 5.9 0 q2.95 -3.2 5.9 0 q2.95 3.2 5.9 0" fill="none" stroke="#e8e8e8" stroke-width="1.3"/>
<rect x="1230" y="120" width="25" height="11" fill="none" stroke="#4a4aa0" stroke-width="1" opacity="0.6"/>
<rect x="1255" y="119.5" width="14" height="12" fill="none" stroke="#6a6ab0" stroke-width="1.2" opacity="0.6"/>
<text x="1232" y="128.3" font-size="10.3" fill="#f0f0f0" font-weight="bold" text-anchor="start" >Link</text>
<text x="1257" y="128.3" font-size="8.8" fill="#f0f0f0" font-weight="bold" text-anchor="start" >FP</text>
<rect x="1207" y="134" width="24" height="15" fill="none" stroke="#4a4aa0" stroke-width="1" opacity="0.6"/>
<rect x="1240" y="134" width="28" height="15" fill="none" stroke="#4a4aa0" stroke-width="1" opacity="0.6"/>
<text x="1208" y="145.2" font-size="11" fill="#58c858" font-weight="bold" text-anchor="start" >IAS</text>
<text x="1228" y="144" font-size="9.5" fill="#fff" font-weight="bold" text-anchor="start" >&lt;&gt;</text>
<text x="1243" y="144" font-size="8.5" fill="#eee" font-weight="normal" text-anchor="start" >Mach</text>
<rect x="1115" y="153" width="155" height="15" fill="none" stroke="#4a4aa0" stroke-width="1" opacity="0.6"/>
<text x="1119" y="164" font-size="9" fill="#eee" font-weight="normal" text-anchor="start" textLength="150" lengthAdjust="spacingAndGlyphs">E/O&lt;&gt;LRC&lt;&gt;Co&lt;&gt;Vx&lt;&gt;Vy&lt;&gt;Turb&lt;&gt;Gl</text>
<rect x="1210" y="167" width="31" height="15" fill="none" stroke="#4a4aa0" stroke-width="1" opacity="0.6"/>
<rect x="1242" y="167" width="28" height="15" fill="none" stroke="#4a4aa0" stroke-width="1" opacity="0.6"/>
<rect x="908" y="192" width="38" height="37" rx="2" fill="#1c1c1c"/>
<rect x="911" y="195" width="32" height="31" rx="2.5" fill="#2c3838" stroke="#627272" stroke-width="1.3"/>
<text x="927.0" y="209.53" font-size="10.5" fill="#d4dcdc" font-weight="normal" text-anchor="middle" textLength="10" lengthAdjust="spacingAndGlyphs">VS</text>
<text x="927.0" y="219.03" font-size="10.5" fill="#d4dcdc" font-weight="normal" text-anchor="middle" textLength="14" lengthAdjust="spacingAndGlyphs">FPA</text>
<text x="948" y="214" font-size="8.5" fill="#f2e8d8" font-weight="bold" text-anchor="start" >VERT</text>
<rect x="968" y="190" width="14" height="40" fill="none" stroke="#4a4aa0" stroke-width="1" opacity="0.6"/>
<rect x="982" y="198" width="48" height="32" fill="none" stroke="#4a4aa0" stroke-width="1" opacity="0.6"/>
<path d="M976 193v32M976 193l-2.5 5h5zM976 225l-2.5-5h5z" stroke="#f4ecdc" stroke-width="1.4" fill="#f4ecdc"/>
<circle cx="1004" cy="214.5" r="15" fill="#3a2e24" opacity="0.75"/>
<circle cx="1000" cy="210.5" r="15" fill="url(#gk)" stroke="#6a5a4a" stroke-width="0.8"/>
<path d="M1012 203l5-2h6M1012 218l5 2h6" stroke="#f4ecdc" stroke-width="1" fill="none"/>
<rect x="1011" y="198" width="14" height="12" fill="none" stroke="#4a4aa0" stroke-width="1" opacity="0.6"/>
<rect x="1011" y="212" width="14" height="12" fill="none" stroke="#4a4aa0" stroke-width="1" opacity="0.6"/>
<text x="1024" y="206" font-size="7.5" fill="#f4ecdc" font-weight="bold" text-anchor="start" >1000</text>
<text x="1026" y="221" font-size="7.5" fill="#f4ecdc" font-weight="bold" text-anchor="start" >100</text>
<rect x="1050" y="192" width="38" height="36" rx="2" fill="#1c1c1c"/>
<rect x="1053" y="195" width="32" height="30" rx="2.5" fill="#2c3838" stroke="#627272" stroke-width="1.3"/>
<text x="1069.0" y="213.78" font-size="10.5" fill="#d4dcdc" font-weight="normal" text-anchor="middle" textLength="19" lengthAdjust="spacingAndGlyphs">HOLD</text>
<rect x="1048" y="192" width="42" height="38" fill="none" stroke="#4a4aa0" stroke-width="1" opacity="0.6"/>
<circle cx="1104.5" cy="204" r="9" fill="#6a7a84"/><circle cx="1104" cy="203.5" r="7.5" fill="#bcd8e8"/>
<circle cx="1124" cy="219.5" r="4.5" fill="#9a7250" stroke="#5a3e28" stroke-width="1.3"/><path d="M1122 217.0v5M1126 217.0v5M1121 219.5h6" stroke="#5a3e28" stroke-width="0.9"/>
<text x="1130" y="213.5" font-size="8.5" fill="#f2e8d8" font-weight="bold" text-anchor="start" >AIRSPEED</text>
<rect x="1165" y="190" width="14" height="40" fill="none" stroke="#4a4aa0" stroke-width="1" opacity="0.6"/>
<rect x="1179" y="190" width="49" height="40" fill="none" stroke="#4a4aa0" stroke-width="1" opacity="0.6"/>
<path d="M1171 198v3M1169.5 199.5h3M1171 218v3M1169.5 219.5h3" stroke="#ffe040" stroke-width="0.9"/>
<circle cx="1202" cy="216" r="14" fill="#2a221c" opacity="0.8"/>
<circle cx="1208.5" cy="215.3" r="2.2" fill="#e6e2da"/>
<circle cx="1201.8" cy="222.0" r="2.2" fill="#e6e2da"/>
<circle cx="1192.2" cy="222.0" r="2.2" fill="#e6e2da"/>
<circle cx="1185.5" cy="215.3" r="2.2" fill="#e6e2da"/>
<circle cx="1185.5" cy="205.7" r="2.2" fill="#e6e2da"/>
<circle cx="1192.2" cy="199.0" r="2.2" fill="#e6e2da"/>
<circle cx="1201.8" cy="199.0" r="2.2" fill="#e6e2da"/>
<circle cx="1208.5" cy="205.7" r="2.2" fill="#e6e2da"/>
<circle cx="1197" cy="210.5" r="12" fill="url(#gk)"/>
<path d="M1231 231v-37h40" fill="none" stroke="#ecdcc0" stroke-width="1.6"/>
<rect x="1257" y="204" width="12" height="18" fill="#8f8a78" stroke="#6a6aa0" stroke-width="1"/><circle cx="1262" cy="213" r="3" fill="#222"/>
</g>
<path d="M592.5 235h674" stroke="#8890c8" stroke-width="1.2"/>
</svg>
<svg style="left:0;top:0" width="1280" height="720" font-family="Liberation Sans">
<defs><linearGradient id="tape" x1="0" x2="1"><stop offset="0" stop-color="#575454"/><stop offset="1" stop-color="#4a4747"/></linearGradient></defs>
<rect x="598.5" y="314.5" width="382.5" height="307" fill="#282626" stroke="#4a4a7a" stroke-width="1"/>
<rect x="608.5" y="320" width="57" height="18" fill="none" stroke="#4c4c94" stroke-width="0.9"/>
<rect x="666" y="320" width="37" height="18" fill="none" stroke="#4c4c94" stroke-width="0.9"/>
<text x="609" y="333.5" font-size="12" fill="#55c855" font-weight="normal" text-anchor="start" >Hdg</text>
<text x="667" y="333.5" font-size="12" fill="#c850b8" font-weight="normal" text-anchor="start" >180</text>
<rect x="705" y="318" width="2" height="22" fill="#9a9ab8"/>
<path d="M604 341.5 q2.375 -3.0 4.75 0 q2.375 3.0 4.75 0 q2.375 -3.0 4.75 0 q2.375 3.0 4.75 0 q2.375 -3.0 4.75 0 q2.375 3.0 4.75 0 q2.375 -3.0 4.75 0 q2.375 3.0 4.75 0 q2.375 -3.0 4.75 0 q2.375 3.0 4.75 0 q2.375 -3.0 4.75 0 q2.375 3.0 4.75 0 q2.375 -3.0 4.75 0 q2.375 3.0 4.75 0 q2.375 -3.0 4.75 0 q2.375 3.0 4.75 0 q2.375 -3.0 4.75 0 q2.375 3.0 4.75 0 q2.375 -3.0 4.75 0 q2.375 3.0 4.75 0 q2.375 -3.0 4.75 0 q2.375 3.0 4.75 0" fill="none" stroke="#e0e0e0" stroke-width="1.2"/>
<rect x="719" y="320" width="29.5" height="18" fill="none" stroke="#4c4c94" stroke-width="0.9"/>
<rect x="748.5" y="320" width="11.5" height="18" fill="none" stroke="#4c4c94" stroke-width="0.9"/>
<rect x="760" y="320" width="37" height="18" fill="none" stroke="#4c4c94" stroke-width="0.9"/>
<rect x="797" y="320" width="50" height="18" fill="none" stroke="#4c4c94" stroke-width="0.9"/>
<text x="719" y="333.5" font-size="12" fill="#55c855" font-weight="normal" text-anchor="start" letter-spacing="-0.8">Alt</text>
<text x="797" y="333.5" font-size="12" fill="#c850b8" font-weight="normal" text-anchor="start" letter-spacing="-0.3">5000</text>
<rect x="854" y="318" width="2" height="22" fill="#8a8ac8"/>
<path d="M717 341.5 q2.375 -3.0 4.75 0 q2.375 3.0 4.75 0 q2.375 -3.0 4.75 0 q2.375 3.0 4.75 0 q2.375 -3.0 4.75 0 q2.375 3.0 4.75 0 q2.375 -3.0 4.75 0 q2.375 3.0 4.75 0 q2.375 -3.0 4.75 0 q2.375 3.0 4.75 0 q2.375 -3.0 4.75 0 q2.375 3.0 4.75 0 q2.375 -3.0 4.75 0 q2.375 3.0 4.75 0 q2.375 -3.0 4.75 0 q2.375 3.0 4.75 0 q2.375 -3.0 4.75 0 q2.375 3.0 4.75 0 q2.375 -3.0 4.75 0 q2.375 3.0 4.75 0 q2.375 -3.0 4.75 0 q2.375 3.0 4.75 0 q2.375 -3.0 4.75 0 q2.375 3.0 4.75 0 q2.375 -3.0 4.75 0 q2.375 3.0 4.75 0" fill="none" stroke="#e0e0e0" stroke-width="1.2"/>
<rect x="880" y="317" width="45" height="16" fill="none" stroke="#4c4c94" stroke-width="0.9"/>
<rect x="927" y="317" width="37" height="16" fill="none" stroke="#4c4c94" stroke-width="0.9"/>
<text x="927" y="330.5" font-size="12" fill="#c850b8" font-weight="normal" text-anchor="start" >250</text>
<path d="M869 342 q2.375 -3.0 4.75 0 q2.375 3.0 4.75 0 q2.375 -3.0 4.75 0 q2.375 3.0 4.75 0 q2.375 -3.0 4.75 0 q2.375 3.0 4.75 0 q2.375 -3.0 4.75 0 q2.375 3.0 4.75 0 q2.375 -3.0 4.75 0 q2.375 3.0 4.75 0 q2.375 -3.0 4.75 0 q2.375 3.0 4.75 0 q2.375 -3.0 4.75 0 q2.375 3.0 4.75 0 q2.375 -3.0 4.75 0 q2.375 3.0 4.75 0 q2.375 -3.0 4.75 0 q2.375 3.0 4.75 0 q2.375 -3.0 4.75 0 q2.375 3.0 4.75 0 q2.375 -3.0 4.75 0 q2.375 3.0 4.75 0" fill="none" stroke="#e0e0e0" stroke-width="1.2"/>
<rect x="614.5" y="354" width="31.5" height="14" fill="none" stroke="#4c4c94" stroke-width="0.9"/>
<rect x="609.5" y="369" width="41" height="205" fill="url(#tape)" stroke="#4a5090" stroke-width="1"/>
<rect x="650.5" y="369" width="15" height="205" fill="#242222" stroke="#4a4a7a" stroke-width="1"/>
<text x="612.3" y="390.4" font-size="9.8" fill="#f4f4f4" font-weight="normal" text-anchor="start" stroke="#f4f4f4" stroke-width="0.25">360</text>
<rect x="642" y="386.4" width="8" height="1.3" fill="#d8d8d8"/>
<text x="612.3" y="405.9" font-size="9.8" fill="#f4f4f4" font-weight="normal" text-anchor="start" stroke="#f4f4f4" stroke-width="0.25">340</text>
<rect x="642" y="401.9" width="8" height="1.3" fill="#d8d8d8"/>
<text x="612.3" y="421.4" font-size="9.8" fill="#f4f4f4" font-weight="normal" text-anchor="start" stroke="#f4f4f4" stroke-width="0.25">320</text>
<rect x="642" y="417.4" width="8" height="1.3" fill="#d8d8d8"/>
<text x="612.3" y="436.79999999999995" font-size="9.8" fill="#f4f4f4" font-weight="normal" text-anchor="start" stroke="#f4f4f4" stroke-width="0.25">300</text>
<rect x="642" y="432.79999999999995" width="8" height="1.3" fill="#d8d8d8"/>
<text x="612.3" y="451.9" font-size="9.8" fill="#f4f4f4" font-weight="normal" text-anchor="start" stroke="#f4f4f4" stroke-width="0.25">280</text>
<rect x="642" y="447.9" width="8" height="1.3" fill="#d8d8d8"/>
<text x="612.3" y="497.09999999999997" font-size="9.8" fill="#f4f4f4" font-weight="normal" text-anchor="start" stroke="#f4f4f4" stroke-width="0.25">220</text>
<rect x="642" y="493.09999999999997" width="8" height="1.3" fill="#d8d8d8"/>
<text x="612.3" y="513.0" font-size="9.8" fill="#f4f4f4" font-weight="normal" text-anchor="start" stroke="#f4f4f4" stroke-width="0.25">200</text>
<rect x="642" y="509.0" width="8" height="1.3" fill="#d8d8d8"/>
<text x="612.3" y="528.4" font-size="9.8" fill="#f4f4f4" font-weight="normal" text-anchor="start" stroke="#f4f4f4" stroke-width="0.25">180</text>
<rect x="642" y="524.4" width="8" height="1.3" fill="#d8d8d8"/>
<text x="612.3" y="543.8" font-size="9.8" fill="#f4f4f4" font-weight="normal" text-anchor="start" stroke="#f4f4f4" stroke-width="0.25">160</text>
<rect x="642" y="539.8" width="8" height="1.3" fill="#d8d8d8"/>
<text x="612.3" y="559.4" font-size="9.8" fill="#f4f4f4" font-weight="normal" text-anchor="start" stroke="#f4f4f4" stroke-width="0.25">140</text>
<rect x="642" y="555.4" width="8" height="1.3" fill="#d8d8d8"/>
<rect x="612" y="466.5" width="20.5" height="10.5" fill="none" stroke="#cfcfcf" stroke-width="0.9"/>
<text x="613" y="474.8" font-size="9.4" fill="#f6f6f6" font-weight="normal" text-anchor="start" >250</text>
<rect x="634" y="464" width="7" height="16" fill="#fff"/>
<path d="M641 464.5h9M641 480h9" stroke="#ddd" stroke-width="1.3"/>
<rect x="614" y="580" width="32" height="25" fill="none" stroke="#4c4c94" stroke-width="0.9"/>
<text x="615" y="596.5" font-size="11" fill="#eee" font-weight="normal" text-anchor="start" >.384</text>
<rect x="669" y="370.5" width="62.5" height="25" fill="none" stroke="#4c4c94" stroke-width="0.9"/>
<rect x="760" y="364.5" width="99" height="30.5" fill="none" stroke="#4c4c94" stroke-width="0.9"/>
<rect x="665.5" y="397" width="187" height="151" fill="#242222" stroke="#4a4a8a" stroke-width="1"/>
<path d="M668.5 489.5V407a7 7 0 0 1 7-7h166.5a7 7 0 0 1 7 7v82.5z" fill="#3a7fc9"/>
<path d="M668.5 489.5h180.5V540a7 7 0 0 1-7 7H675.5a7 7 0 0 1-7-7z" fill="#6d3f27"/>
<rect x="668.5" y="488.3" width="180.5" height="2" fill="#e6eef6"/>
<path d="M735.6 403L736.7 407" stroke="#f2f6fa" stroke-width="1.8"/>
<path d="M722.6 405.3L724.2 408.6" stroke="#f2f6fa" stroke-width="1.8"/>
<path d="M701.3 405.3L708.4 414.8" stroke="#f2f6fa" stroke-width="1.8"/>
<path d="M687 422L690 425" stroke="#f2f6fa" stroke-width="1.8"/>
<path d="M674 439L681.7 442" stroke="#f2f6fa" stroke-width="1.8"/>
<path d="M773.3 403L772 406.5" stroke="#f2f6fa" stroke-width="1.8"/>
<path d="M790 404.6L788 408.4" stroke="#f2f6fa" stroke-width="1.8"/>
<path d="M809 405.3L801.7 414.8" stroke="#f2f6fa" stroke-width="1.8"/>
<path d="M823.4 423.5L820.6 426.6" stroke="#f2f6fa" stroke-width="1.8"/>
<path d="M842.3 436.5L834.7 440" stroke="#f2f6fa" stroke-width="1.8"/>
<path d="M751.8 400.5h10l-5 6zM756.8 407l-7 8h14z" fill="#f4f4f4"/><path d="M752.8 413h8" stroke="#3a7fc9" stroke-width="1.2"/>
<path d="M722 427H797" stroke="#e4eef8" stroke-width="1.5"/>
<text x="720" y="431" font-size="10" fill="#e4eef8" font-weight="normal" text-anchor="end" >20</text>
<text x="798" y="431" font-size="10" fill="#e4eef8" font-weight="normal" text-anchor="start" >20</text>
<path d="M747.3 435H766.3" stroke="#e4eef8" stroke-width="1.5"/>
<path d="M737.8 443H775.8" stroke="#e4eef8" stroke-width="1.5"/>
<path d="M747.3 451H766.3" stroke="#e4eef8" stroke-width="1.5"/>
<path d="M747.3 466H766.3" stroke="#e4eef8" stroke-width="1.5"/>
<path d="M747.3 482H766.3" stroke="#e4eef8" stroke-width="1.5"/>
<path d="M719 459H796" stroke="#e4eef8" stroke-width="1.5"/>
<text x="717" y="463" font-size="10" fill="#e4eef8" font-weight="normal" text-anchor="end" >IO</text>
<text x="799" y="463" font-size="10" fill="#e4eef8" font-weight="normal" text-anchor="start" >IO</text>
<path d="M747.3 497H766.3" stroke="#ecc8a6" stroke-width="1.5"/>
<path d="M737.8 504.5H775.8" stroke="#ecc8a6" stroke-width="1.5"/>
<path d="M747.3 511H766.3" stroke="#ecc8a6" stroke-width="1.5"/>
<path d="M747.3 526H766.3" stroke="#ecc8a6" stroke-width="1.5"/>
<path d="M737.8 535H775.8" stroke="#ecc8a6" stroke-width="1.5"/>
<path d="M719 518H796" stroke="#ecc8a6" stroke-width="1.5"/>
<text x="717" y="522" font-size="10" fill="#ecc8a6" font-weight="normal" text-anchor="end" >IO</text>
<text x="799" y="522" font-size="10" fill="#ecc8a6" font-weight="normal" text-anchor="start" >IO</text>
<path d="M684 473.5h38v11h-4.5v-7h-33.5z" fill="#111" stroke="#fff" stroke-width="1.4"/>
<path d="M831 473.5h-38v11h4.5v-7h33.5z" fill="#111" stroke="#fff" stroke-width="1.4"/>
<rect x="753.3" y="473" width="7" height="6" fill="#111" stroke="#fff" stroke-width="1"/>
<path d="M710 476H808M756.8 427V520" stroke="#d050a8" stroke-width="1.8"/>
<rect x="668" y="548" width="186" height="14" fill="none" stroke="#4c4c94" stroke-width="0.9"/>
<rect x="667.7" y="563.2" width="193.3" height="25.4" fill="#555252"/>
<path d="M684 565v3" stroke="#ccc" stroke-width="1"/>
<path d="M700 565v3" stroke="#ccc" stroke-width="1"/>
<path d="M716 565v3" stroke="#ccc" stroke-width="1"/>
<path d="M732 565v3" stroke="#ccc" stroke-width="1"/>
<path d="M748 565v3" stroke="#ccc" stroke-width="1"/>
<path d="M780 565v3" stroke="#ccc" stroke-width="1"/>
<path d="M796 565v3" stroke="#ccc" stroke-width="1"/>
<path d="M812 565v3" stroke="#ccc" stroke-width="1"/>
<path d="M828 565v3" stroke="#ccc" stroke-width="1"/>
<path d="M844 565v3" stroke="#ccc" stroke-width="1"/>
<text x="716" y="580.5" font-size="9.6" fill="#f2f2f2" font-weight="normal" text-anchor="middle" >120</text>
<text x="812" y="580.5" font-size="9.6" fill="#f2f2f2" font-weight="normal" text-anchor="middle" >240</text>
<rect x="754.5" y="568" width="21" height="15" fill="none" stroke="#d0d0d0" stroke-width="0.9"/>
<text x="765" y="580.5" font-size="9.6" fill="#f6f6f6" font-weight="normal" text-anchor="middle" >180</text>
<rect x="761.5" y="564" width="7" height="10" fill="#fff"/>
<rect x="855" y="398" width="10" height="150" fill="none" stroke="#4c4c94" stroke-width="0.9"/>
<rect x="876.5" y="350" width="49.5" height="17" fill="none" stroke="#4c4c94" stroke-width="0.9"/>
<rect x="864" y="369" width="8.5" height="205" fill="#242222" stroke="#4a4a7a" stroke-width="1"/>
<rect x="872.5" y="368.8" width="54.5" height="205" fill="url(#tape)" stroke="#4a5090" stroke-width="1"/>
<rect x="917" y="379.3" width="9" height="1.4" fill="#fff"/>
<rect x="917" y="394.65000000000003" width="9" height="1.4" fill="#cfcfcf"/>
<rect x="917" y="410.0" width="9" height="1.4" fill="#cfcfcf"/>
<rect x="917" y="425.35" width="9" height="1.4" fill="#cfcfcf"/>
<rect x="917" y="440.7" width="9" height="1.4" fill="#cfcfcf"/>
<rect x="917" y="456.05" width="9" height="1.4" fill="#cfcfcf"/>
<rect x="917" y="486.75" width="9" height="1.4" fill="#cfcfcf"/>
<rect x="917" y="502.1" width="9" height="1.4" fill="#cfcfcf"/>
<rect x="917" y="517.4499999999999" width="9" height="1.4" fill="#cfcfcf"/>
<rect x="917" y="532.8" width="9" height="1.4" fill="#cfcfcf"/>
<rect x="917" y="548.15" width="9" height="1.4" fill="#cfcfcf"/>
<rect x="917" y="563.5" width="9" height="1.4" fill="#cfcfcf"/>
<text x="882" y="397.5" font-size="10" fill="#f2f2f2" font-weight="normal" text-anchor="start" >5500</text>
<text x="882" y="551" font-size="10" fill="#f2f2f2" font-weight="normal" text-anchor="start" >4500</text>
<rect x="880.5" y="465" width="25" height="11" fill="none" stroke="#cfcfcf" stroke-width="0.9"/>
<text x="881.5" y="474.5" font-size="9.8" fill="#f6f6f6" font-weight="normal" text-anchor="start" letter-spacing="-0.3">5000</text>
<rect x="909" y="463.5" width="7.5" height="16" fill="#fff"/>
<rect x="929" y="369" width="40" height="205" fill="#4b4848"/>
<path d="M944 375h9" stroke="#bdbdbd" stroke-width="1.3"/>
<path d="M936 381.4h25" stroke="#cfcfcf" stroke-width="1.3"/>
<text x="963.5" y="384.4" font-size="7.5" fill="#eee" font-weight="bold" text-anchor="start" >3</text>
<path d="M936 394.5h25" stroke="#cfcfcf" stroke-width="1.3"/>
<text x="963.5" y="397.5" font-size="7.5" fill="#eee" font-weight="bold" text-anchor="start" >2</text>
<path d="M944 407h9" stroke="#bdbdbd" stroke-width="1.3"/>
<path d="M936 420h25" stroke="#cfcfcf" stroke-width="1.3"/>
<text x="963.5" y="423" font-size="7.5" fill="#eee" font-weight="bold" text-anchor="start" >1</text>
<path d="M944 430h9" stroke="#bdbdbd" stroke-width="1.3"/>
<path d="M944 440h9" stroke="#bdbdbd" stroke-width="1.3"/>
<path d="M944 450h9" stroke="#bdbdbd" stroke-width="1.3"/>
<path d="M944 461h9" stroke="#bdbdbd" stroke-width="1.3"/>
<path d="M936 470.5h25" stroke="#fff" stroke-width="2.6"/>
<text x="963.5" y="473.5" font-size="7.5" fill="#eee" font-weight="bold" text-anchor="start" >0</text>
<path d="M944 480h9" stroke="#bdbdbd" stroke-width="1.3"/>
<path d="M944 490h9" stroke="#bdbdbd" stroke-width="1.3"/>
<path d="M944 500h9" stroke="#bdbdbd" stroke-width="1.3"/>
<path d="M944 510h9" stroke="#bdbdbd" stroke-width="1.3"/>
<path d="M936 521h25" stroke="#cfcfcf" stroke-width="1.3"/>
<text x="963.5" y="524" font-size="7.5" fill="#eee" font-weight="bold" text-anchor="start" >1</text>
<path d="M944 534h9" stroke="#bdbdbd" stroke-width="1.3"/>
<path d="M936 546.5h25" stroke="#cfcfcf" stroke-width="1.3"/>
<text x="963.5" y="549.5" font-size="7.5" fill="#eee" font-weight="bold" text-anchor="start" >2</text>
<path d="M936 559.5h25" stroke="#cfcfcf" stroke-width="1.3"/>
<text x="963.5" y="562.5" font-size="7.5" fill="#eee" font-weight="bold" text-anchor="start" >3</text>
</svg>
<svg style="left:0;top:0" width="1280" height="720" font-family="Liberation Sans">
<defs><clipPath id="ndc"><rect x="1042" y="352.6" width="224" height="329.4"/></clipPath></defs>
<rect x="1033.9" y="343.9" width="232.1" height="346.1" fill="#5e4c38"/>
<path d="M1034 690V344h232" fill="none" stroke="#5a6aa8" stroke-width="1"/>
<path d="M1034 690h232" fill="none" stroke="#5a6aa8" stroke-width="1.2"/>
<rect x="1042" y="352.6" width="224" height="329.4" fill="#272525"/>
<g clip-path="url(#ndc)">
<path d="M1006.2 513.5A206 206 0 0 1 1363.0 513.5" fill="none" stroke="#d8d8d8" stroke-width="1.1"/>
<path d="M1006.2 513.5L1014.9 518.5" stroke="#d8d8d8" stroke-width="1.1"/>
<path d="M1015.9 498.3L1020.0 501.2" stroke="#d8d8d8" stroke-width="1.1"/>
<path d="M1026.8 484.1L1034.5 490.5" stroke="#d8d8d8" stroke-width="1.1"/>
<path d="M1038.9 470.8L1042.5 474.4" stroke="#d8d8d8" stroke-width="1.1"/>
<path d="M1052.2 458.7L1058.6 466.4" stroke="#d8d8d8" stroke-width="1.1"/>
<path d="M1066.4 447.8L1069.3 451.9" stroke="#d8d8d8" stroke-width="1.1"/>
<path d="M1081.6 438.1L1086.6 446.8" stroke="#d8d8d8" stroke-width="1.1"/>
<path d="M1097.5 429.8L1099.7 434.3" stroke="#d8d8d8" stroke-width="1.1"/>
<path d="M1114.1 422.9L1117.6 432.3" stroke="#d8d8d8" stroke-width="1.1"/>
<path d="M1131.3 417.5L1132.6 422.3" stroke="#d8d8d8" stroke-width="1.1"/>
<path d="M1148.8 413.6L1150.6 423.5" stroke="#d8d8d8" stroke-width="1.1"/>
<path d="M1166.6 411.3L1167.1 416.3" stroke="#d8d8d8" stroke-width="1.1"/>
<path d="M1202.6 411.3L1202.1 416.3" stroke="#d8d8d8" stroke-width="1.1"/>
<path d="M1220.4 413.6L1218.6 423.5" stroke="#d8d8d8" stroke-width="1.1"/>
<path d="M1237.9 417.5L1236.6 422.3" stroke="#d8d8d8" stroke-width="1.1"/>
<path d="M1255.1 422.9L1251.6 432.3" stroke="#d8d8d8" stroke-width="1.1"/>
<path d="M1271.7 429.8L1269.5 434.3" stroke="#d8d8d8" stroke-width="1.1"/>
<path d="M1287.6 438.1L1282.6 446.8" stroke="#d8d8d8" stroke-width="1.1"/>
<path d="M1302.8 447.8L1299.9 451.9" stroke="#d8d8d8" stroke-width="1.1"/>
<path d="M1317.0 458.7L1310.6 466.4" stroke="#d8d8d8" stroke-width="1.1"/>
<path d="M1330.3 470.8L1326.7 474.4" stroke="#d8d8d8" stroke-width="1.1"/>
<path d="M1342.4 484.1L1334.7 490.5" stroke="#d8d8d8" stroke-width="1.1"/>
<path d="M1353.3 498.3L1349.2 501.2" stroke="#d8d8d8" stroke-width="1.1"/>
<path d="M1363.0 513.5L1354.3 518.5" stroke="#d8d8d8" stroke-width="1.1"/>
<text x="1185" y="433" font-size="10.5" fill="#eee" font-weight="normal" text-anchor="middle" >36</text>
<text x="1096" y="458" font-size="10.5" fill="#eee" font-weight="normal" text-anchor="middle" >33</text>
<path d="M1184.6 378V603" stroke="#e8e8e8" stroke-width="1.1"/>
<path d="M1176.6 370V378H1206.6V359H1162.6V378" fill="none" stroke="#777" stroke-width="0.7"/>
<path d="M1175.1 412V403.5L1184.6 411L1194.1 403.5V412" fill="none" stroke="#d060b8" stroke-width="2.8"/>
<path d="M1178.6 402h12" stroke="#bbb" stroke-width="0.8"/>
<text x="1057" y="376" font-size="12" fill="#f0f0f0" font-weight="normal" text-anchor="start" letter-spacing="-0.7">280°/42</text>
<path d="M1062 388.5L1094 396.5M1094 396.5l-6-4M1094 396.5l-7 1" stroke="#ddd" stroke-width="1" fill="none"/>
<text x="1137.5" y="376.5" font-size="15" fill="#55c455" font-weight="normal" text-anchor="start" letter-spacing="0.2">TRK</text>
<text x="1169.5" y="376.5" font-size="18.5" fill="#f6f6f6" font-weight="normal" text-anchor="start" letter-spacing="-0.6">000</text>
<text x="1208" y="376.5" font-size="15" fill="#55c455" font-weight="normal" text-anchor="start" letter-spacing="0.1">MAG</text>
<text x="1172" y="511" font-size="10" fill="#eee" font-weight="normal" text-anchor="middle" >20</text>
<path d="M1180.6 507.5h8" stroke="#aaa" stroke-width="1"/>
<path d="M1219 414Q1200 510 1185 603" fill="none" stroke="#d060b0" stroke-width="3" stroke-dasharray="8 9"/>
<path d="M1184.6 604.5L1195.5 630H1173.3z" fill="none" stroke="#d8d8d8" stroke-width="1.2"/>
<rect x="1181" y="604.5" width="5" height="5" fill="none" stroke="#5ac8c8" stroke-width="0.9"/>
<rect x="1187" y="581" width="5" height="8" fill="none" stroke="#aaa" stroke-width="0.9"/>
<text x="1190" y="611.5" font-size="10.5" fill="#5ac8d0" font-weight="normal" text-anchor="start" letter-spacing="-0.3">D186A</text>
<rect x="1206" y="595" width="7" height="5" fill="none" stroke="#5ac8c8" stroke-width="0.9"/><rect x="1246" y="597" width="6" height="5" fill="none" stroke="#5ac8c8" stroke-width="0.9"/>
<path d="M1190 604L1206 598M1213 598h2M1243 599h3M1252 602L1268 616" stroke="#5ab8b8" stroke-width="0.9"/>
<text x="1215" y="602" font-size="10.5" fill="#5ac8d0" font-weight="normal" text-anchor="start" letter-spacing="-0.5">(INTC)</text>
<text x="1255" y="602" font-size="10.5" fill="#5ac8d0" font-weight="normal" text-anchor="start" >DO</text>
</g>
<rect x="845" y="670" width="98" height="10" fill="none" stroke="#6a6ab8" stroke-width="0.9"/>
<rect x="943" y="670" width="37" height="10" fill="none" stroke="#6a6ab8" stroke-width="0.9"/>
<rect x="845.5" y="680.5" width="97.5" height="10" fill="none" stroke="#6a6ab8" stroke-width="0.9"/>
<rect x="943" y="680.5" width="45.5" height="10" fill="none" stroke="#6a6ab8" stroke-width="0.9"/>
<text x="845.5" y="678.3" font-size="8.8" fill="#c8cc48" font-weight="normal" text-anchor="start" textLength="90" lengthAdjust="spacingAndGlyphs">Distance to Destination:</text>
<text x="943.5" y="678.3" font-size="8.8" fill="#c8cc48" font-weight="normal" text-anchor="start" >336</text>
<text x="846" y="688.8" font-size="8.8" fill="#c8cc48" font-weight="normal" text-anchor="start" textLength="56" lengthAdjust="spacingAndGlyphs">True Airspeed:</text>
<text x="943.5" y="688.8" font-size="8.8" fill="#c8cc48" font-weight="normal" text-anchor="start" >250</text>
</svg>
</body></html>
